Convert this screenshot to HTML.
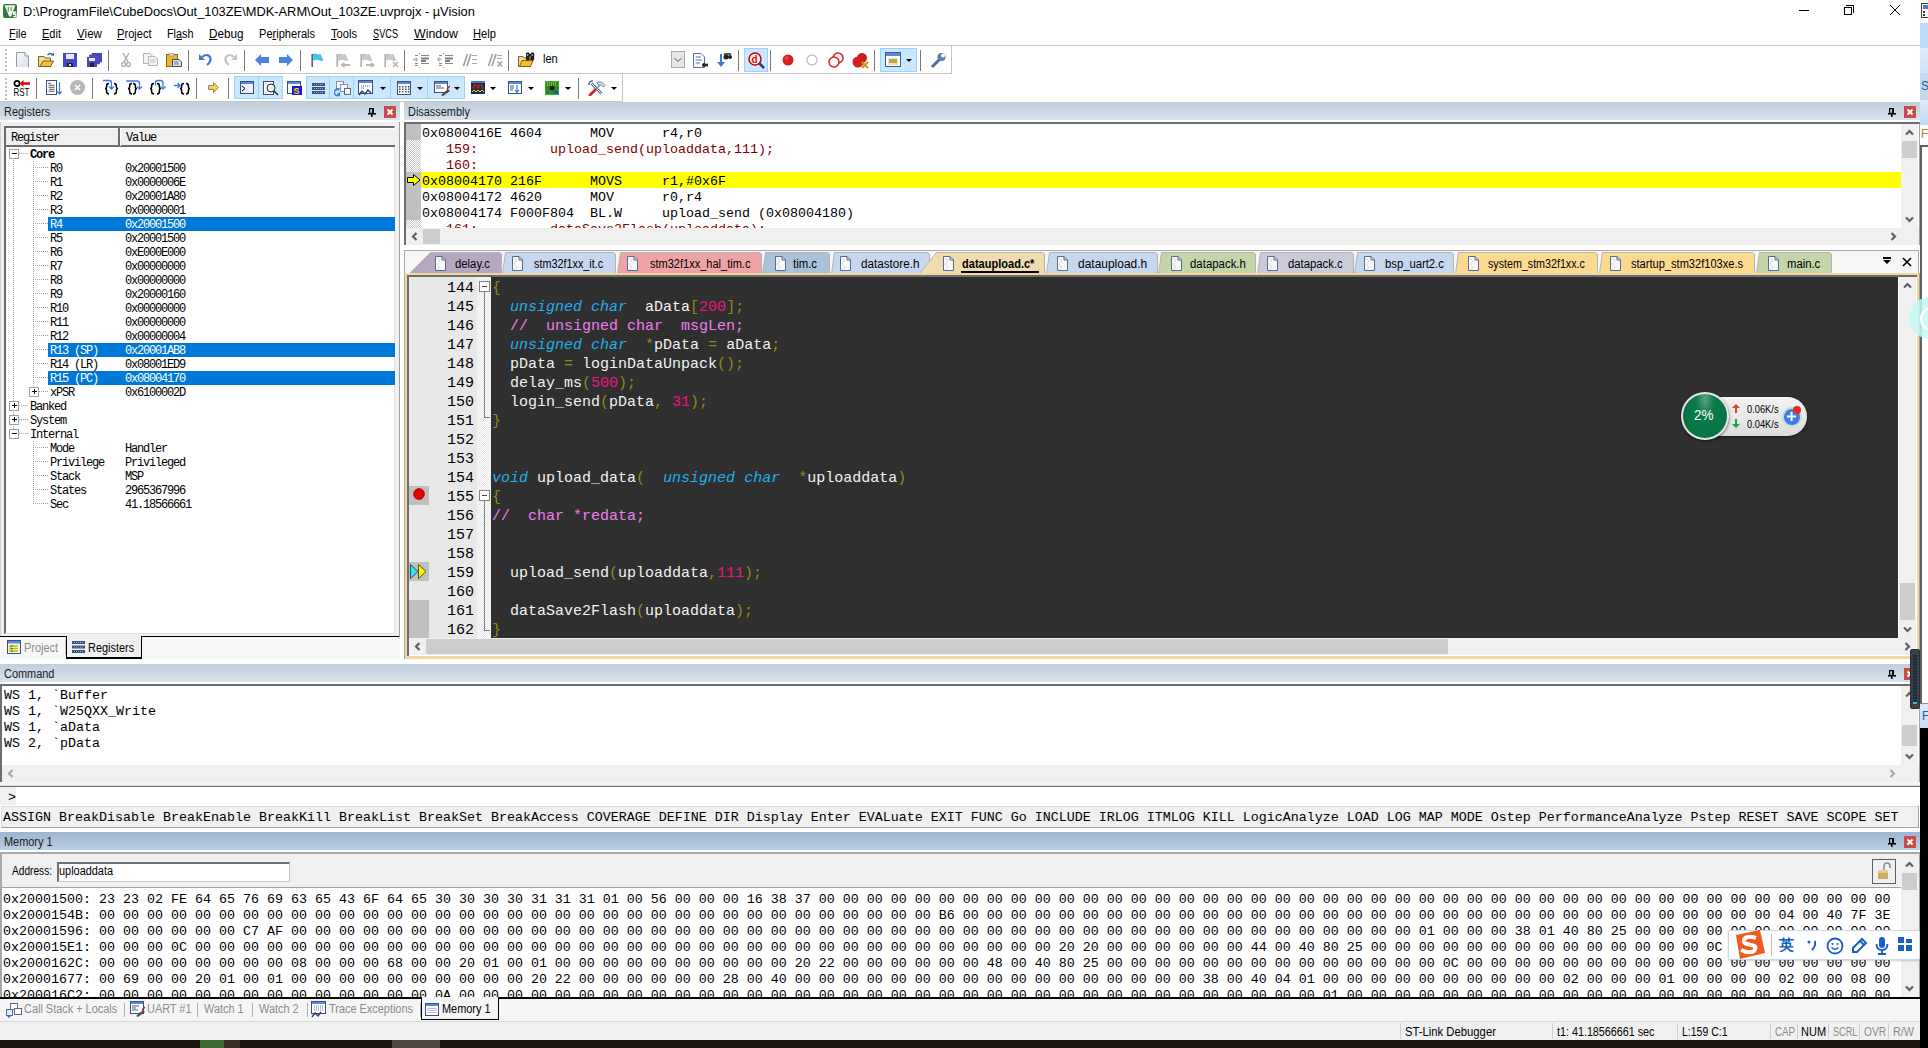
<!DOCTYPE html>
<html><head><meta charset="utf-8"><title>uVision</title>
<style>
*{box-sizing:border-box;margin:0;padding:0}
html,body{width:1928px;height:1048px;overflow:hidden;background:#fff}
body{position:relative;font-family:"Liberation Sans",sans-serif;font-size:12px;color:#000}
.a{position:absolute}
.ui{font-family:"Liberation Sans",sans-serif;font-size:12px;white-space:nowrap;transform:scaleX(.91);transform-origin:0 0}
.mono{font-family:"Liberation Mono",monospace;white-space:pre}
.hdr{position:absolute;height:18px;background:linear-gradient(#c1cedb,#d6e2ee);}
.hdr.act{background:linear-gradient(#9db4cf,#bcd0e6);}
.hdr span{position:absolute;left:4px;top:3px;font-size:12px;color:#1b1b1b;transform:scaleX(.91);transform-origin:0 0;white-space:nowrap}
.pin{position:absolute;width:8px;height:9px;top:6px}
svg{display:block}
.xbtn{position:absolute;width:12px;height:12px;top:4px;background:#c84c4c}
.sep{position:absolute;width:1px;background:#6e6e6e}
.dd{position:absolute;width:0;height:0;border-left:3px solid transparent;border-right:3px solid transparent;border-top:3px solid #000}
.selb{position:absolute;background:#cce8ff;border:1px solid #99d1ff}
</style><style>
.reg{font-family:"Liberation Mono",monospace;font-size:12px;letter-spacing:-1.2px;white-space:pre;line-height:13px;color:#000}
.cour{font-size:13.333px;line-height:16px;color:#000;margin-top:2px}
.ednum{font-size:15px;line-height:19px;color:#000}
.edcode{font-size:15px;line-height:19px;color:#f2f2f2}
.edcode i{font-style:italic}
</style>
</head><body>
<div class="a" style="left:0px;top:0px;width:1920px;height:22px;background:#fff"></div>
<svg class="a" style="left:3px;top:4px" width="14" height="14" viewBox="0 0 14 14"><rect x="0" y="0" width="14" height="14" rx="2" fill="#2f7a3c"/><path d="M1.5 1.3H12.3L8.2 12.5H6.2Z" fill="#f6faf6"/><path d="M5.3 2.8V7.5M8.2 2.8V7" stroke="#6aa872" stroke-width="1.3"/><path d="M13.2 8.3H10.6V10.3H12.8V12.6H10.2" fill="none" stroke="#fff" stroke-width="1.4"/></svg>
<div class="a ui" style="left:23px;top:4px;font-size:13px;color:#000;transform:scaleX(.988)">D:\ProgramFile\CubeDocs\Out_103ZE\MDK-ARM\Out_103ZE.uvprojx - µVision</div>
<div class="a" style="left:1799px;top:10px;width:10px;height:1px;background:#000"></div>
<div class="a" style="left:1846px;top:5px;width:8px;height:8px;border:1px solid #000;border-left:none;border-bottom:none"></div>
<div class="a" style="left:1844px;top:7px;width:8px;height:8px;border:1px solid #000;background:#fff"></div>
<svg class="a" style="left:1889px;top:4px" width="12" height="12"><path d="M1 1L11 11M11 1L1 11" stroke="#000" stroke-width="1"/></svg>
<div class="a ui" style="left:9px;top:27px;font-size:12px;color:#000;transform:scaleX(0.907)"><u style="text-decoration-thickness:1px;text-underline-offset:1px">F</u>ile</div>
<div class="a ui" style="left:42px;top:27px;font-size:12px;color:#000;transform:scaleX(0.918)"><u style="text-decoration-thickness:1px;text-underline-offset:1px">E</u>dit</div>
<div class="a ui" style="left:77px;top:27px;font-size:12px;color:#000;transform:scaleX(0.969)"><u style="text-decoration-thickness:1px;text-underline-offset:1px">V</u>iew</div>
<div class="a ui" style="left:117px;top:27px;font-size:12px;color:#000;transform:scaleX(0.928)"><u style="text-decoration-thickness:1px;text-underline-offset:1px">P</u>roject</div>
<div class="a ui" style="left:167px;top:27px;font-size:12px;color:#000;transform:scaleX(0.9)">Fl<u style="text-decoration-thickness:1px;text-underline-offset:1px">a</u>sh</div>
<div class="a ui" style="left:209px;top:27px;font-size:12px;color:#000;transform:scaleX(0.977)"><u style="text-decoration-thickness:1px;text-underline-offset:1px">D</u>ebug</div>
<div class="a ui" style="left:259px;top:27px;font-size:12px;color:#000;transform:scaleX(0.923)">Pe<u style="text-decoration-thickness:1px;text-underline-offset:1px">r</u>ipherals</div>
<div class="a ui" style="left:331px;top:27px;font-size:12px;color:#000;transform:scaleX(0.93)"><u style="text-decoration-thickness:1px;text-underline-offset:1px">T</u>ools</div>
<div class="a ui" style="left:373px;top:27px;font-size:12px;color:#000;transform:scaleX(0.765)"><u style="text-decoration-thickness:1px;text-underline-offset:1px">S</u>VCS</div>
<div class="a ui" style="left:414px;top:27px;font-size:12px;color:#000;transform:scaleX(1.03)"><u style="text-decoration-thickness:1px;text-underline-offset:1px">W</u>indow</div>
<div class="a ui" style="left:473px;top:27px;font-size:12px;color:#000;transform:scaleX(0.93)"><u style="text-decoration-thickness:1px;text-underline-offset:1px">H</u>elp</div>
<div class="a" style="left:0px;top:45px;width:1920px;height:1px;background:#c6c6c6"></div>
<div class="a" style="left:951px;top:45px;width:1px;height:29px;background:#c6c6c6"></div>
<div class="a" style="left:0px;top:73px;width:951px;height:1px;background:#c6c6c6"></div>
<div class="a" style="left:622px;top:74px;width:1px;height:28px;background:#c6c6c6"></div>
<div class="a" style="left:0px;top:101px;width:623px;height:1px;background:#c6c6c6"></div>
<div class="a" style="left:5px;top:49px;width:2px;height:2px;background:#c0c0c0"></div><div class="a" style="left:5px;top:53px;width:2px;height:2px;background:#c0c0c0"></div><div class="a" style="left:5px;top:57px;width:2px;height:2px;background:#c0c0c0"></div><div class="a" style="left:5px;top:61px;width:2px;height:2px;background:#c0c0c0"></div><div class="a" style="left:5px;top:65px;width:2px;height:2px;background:#c0c0c0"></div><div class="a" style="left:5px;top:69px;width:2px;height:2px;background:#c0c0c0"></div>
<svg class="a" style="left:16px;top:52px" width="13" height="15" viewBox="0 0 13 15"><defs><linearGradient id="gd" x1="0" y1="0" x2="1" y2="1"><stop offset="0" stop-color="#fafbfe"/><stop offset="1" stop-color="#d8e0f2"/></linearGradient></defs><path d="M0.5 15V0.5H9L12.5 4V15" fill="url(#gd)" stroke="#9a9a9a"/><path d="M9 0.5V4H12.5" fill="#fff" stroke="#9a9a9a"/></svg>
<svg class="a" style="left:38px;top:52px" width="17" height="16" viewBox="0 0 17 16"><path d="M0.5 4.5H6L7 6H12.5V14.5H0.5Z" fill="#f5df8a" stroke="#7a6030"/><path d="M2 14.5L5 9H15.5L12.5 14.5Z" fill="#f5c040" stroke="#7a6030"/><path d="M9.5 3Q12 0 15 3" fill="none" stroke="#2a5a98" stroke-width="1.3"/><path d="M13 3.5H16V0.5Z" fill="#2a5a98"/></svg>
<svg class="a" style="left:63px;top:53px" width="14" height="14" viewBox="0 0 14 14"><rect x="0" y="0" width="14" height="14" fill="#4848c0"/><rect x="3" y="1" width="8" height="5" fill="#e8ecf8"/><rect x="4" y="10" width="6" height="4" fill="#202040"/><rect x="6" y="11" width="2" height="2" fill="#ddd"/></svg>
<svg class="a" style="left:87px;top:53px" width="15" height="14" viewBox="0 0 15 14"><rect x="5" y="0" width="10" height="9" fill="#5050c8" stroke="#3030a0" stroke-width="0.5"/><rect x="2.5" y="2" width="10" height="9" fill="#5050c8" stroke="#3030a0" stroke-width="0.5"/><rect x="0" y="4" width="10" height="10" fill="#4848c0"/><rect x="2" y="5" width="6" height="3" fill="#e8ecf8"/><rect x="3" y="10" width="4" height="4" fill="#202040"/></svg>
<div class="a" style="left:108px;top:50px;width:1px;height:21px;background:#787878"></div>
<svg class="a" style="left:121px;top:53px" width="10" height="14" viewBox="0 0 10 14"><path d="M2 0L7 9M8 0L3 9" stroke="#b0b0b0" stroke-width="1.5"/><circle cx="2.5" cy="11.5" r="2" fill="none" stroke="#b0b0b0" stroke-width="1.3"/><circle cx="7.5" cy="11.5" r="2" fill="none" stroke="#b0b0b0" stroke-width="1.3"/></svg>
<svg class="a" style="left:143px;top:53px" width="16" height="13" viewBox="0 0 16 13"><path d="M0.5 0.5H7L9.5 3V10.5H0.5Z" fill="#f4f4f4" stroke="#b4b4b4"/><path d="M5.5 3.5H12L14.5 6V12.5H5.5Z" fill="#f4f4f4" stroke="#b4b4b4"/><path d="M7 7H12M7 9H12" stroke="#c0c0c0"/></svg>
<svg class="a" style="left:166px;top:53px" width="16" height="14" viewBox="0 0 16 14"><rect x="0.5" y="1.5" width="11" height="12" fill="#e8b830" stroke="#8a6a10"/><rect x="3" y="0" width="5" height="3" fill="#d4d4d4" stroke="#888" stroke-width="0.5"/><path d="M6.5 6.5H13L15.5 9V13.5H6.5Z" fill="#dde4f0" stroke="#404860"/><path d="M8 9H12M8 11H13" stroke="#6a7088"/></svg>
<div class="a" style="left:188px;top:50px;width:1px;height:21px;background:#787878"></div>
<svg class="a" style="left:199px;top:53px" width="13" height="13" viewBox="0 0 13 13"><path d="M3 4Q8 0 11 4Q13 8 8 12" fill="none" stroke="#3d78d8" stroke-width="2.2"/><path d="M0 1V7H6Z" fill="#3d78d8"/></svg>
<svg class="a" style="left:224px;top:53px" width="13" height="13" viewBox="0 0 13 13"><path d="M10 4Q5 0 2 4Q0 8 5 12" fill="none" stroke="#c4c4c4" stroke-width="2.2"/><path d="M13 1V7H7Z" fill="#c4c4c4"/></svg>
<div class="a" style="left:244px;top:50px;width:1px;height:21px;background:#787878"></div>
<svg class="a" style="left:255px;top:54px" width="14" height="12" viewBox="0 0 14 12"><path d="M0 6L6 0V3H14V9H6V12Z" fill="#4a84e0"/></svg>
<svg class="a" style="left:279px;top:54px" width="14" height="12" viewBox="0 0 14 12"><path d="M14 6L8 0V3H0V9H8V12Z" fill="#4a84e0"/></svg>
<div class="a" style="left:300px;top:50px;width:1px;height:21px;background:#787878"></div>
<svg class="a" style="left:310px;top:53px" width="15" height="15" viewBox="0 0 15 15"><path d="M2.5 1.5Q5 -0.5 8 1.5L10.5 1L13.5 7.5Q11 8.5 8.5 7Q6 6 3.5 8Z" fill="#3cc8e8"/><path d="M2.2 1V14" stroke="#606060" stroke-width="1.6"/></svg>
<svg class="a" style="left:335px;top:53px" width="17" height="15" viewBox="0 0 17 15"><path d="M2.5 1.5Q5 -0.5 8 1.5L10.5 1L13.5 7.5Q11 8.5 8.5 7Q6 6 3.5 8Z" fill="#c8c8c8"/><path d="M2.2 1V14" stroke="#b0b0b0" stroke-width="1.6"/><path d="M7.5 12H15M9.5 10L7 12L9.5 14" stroke="#b8b8b8" stroke-width="1.8" fill="none"/></svg>
<svg class="a" style="left:359px;top:53px" width="17" height="15" viewBox="0 0 17 15"><path d="M2.5 1.5Q5 -0.5 8 1.5L10.5 1L13.5 7.5Q11 8.5 8.5 7Q6 6 3.5 8Z" fill="#c8c8c8"/><path d="M2.2 1V14" stroke="#b0b0b0" stroke-width="1.6"/><path d="M7 12H14.5M12 10L14.5 12L12 14" stroke="#b8b8b8" stroke-width="1.8" fill="none"/></svg>
<svg class="a" style="left:383px;top:53px" width="17" height="15" viewBox="0 0 17 15"><path d="M2.5 1.5Q5 -0.5 8 1.5L10.5 1L13.5 7.5Q11 8.5 8.5 7Q6 6 3.5 8Z" fill="#c8c8c8"/><path d="M2.2 1V14" stroke="#b0b0b0" stroke-width="1.6"/><path d="M10 9L15 14M15 9L10 14" stroke="#b8b8b8" stroke-width="1.6"/></svg>
<div class="a" style="left:404px;top:50px;width:1px;height:21px;background:#787878"></div>
<svg class="a" style="left:413px;top:52px" width="17" height="17" viewBox="0 0 17 17"><path d="M2 3.5H5M2 11.5H5M2 13.5H5M8 3.5H16M8 11.5H16" stroke="#8a8a8a" stroke-width="1"/><path d="M8 6.5H16M8 9H13" stroke="#808080" stroke-width="1.8"/><rect x="6" y="1" width="1" height="1" fill="#808080"/><rect x="6" y="15" width="1" height="1" fill="#808080"/><path d="M0 7.5H4M2.5 5.5L4.5 7.5L2.5 9.5" stroke="#b8b8b8" stroke-width="1.3" fill="none"/></svg>
<svg class="a" style="left:437px;top:52px" width="17" height="17" viewBox="0 0 17 17"><path d="M2 3.5H5M2 11.5H5M2 13.5H5M8 3.5H16M8 11.5H16" stroke="#8a8a8a" stroke-width="1"/><path d="M8 6.5H16M8 9H13" stroke="#808080" stroke-width="1.8"/><rect x="6" y="1" width="1" height="1" fill="#808080"/><rect x="6" y="15" width="1" height="1" fill="#808080"/><path d="M0.5 7.5H4.5M2.5 5.5L0.5 7.5L2.5 9.5" stroke="#b8b8b8" stroke-width="1.3" fill="none"/></svg>
<svg class="a" style="left:462px;top:53px" width="16" height="14" viewBox="0 0 16 14"><path d="M1.5 13L5.5 1M5 13L9 1" stroke="#a0a0a0" stroke-width="1.6"/><path d="M10 2.5H15M10 6.5H15M10 10.5H15" stroke="#a8a8a8"/></svg>
<svg class="a" style="left:487px;top:53px" width="16" height="15" viewBox="0 0 16 15"><path d="M1.5 13L5.5 1M5 13L9 1" stroke="#a0a0a0" stroke-width="1.6"/><path d="M10 2.5H15M10 5.5H15" stroke="#a8a8a8"/><path d="M10.5 8.5L15 13.5M15 8.5L10.5 13.5" stroke="#a8a8a8" stroke-width="1.8"/></svg>
<div class="a" style="left:508px;top:50px;width:1px;height:21px;background:#787878"></div>
<svg class="a" style="left:518px;top:52px" width="17" height="16" viewBox="0 0 17 16"><path d="M0.5 4.5H5L6 6H12.5V14.5H0.5Z" fill="#f5e090" stroke="#806020"/><path d="M1.5 14.5L4 8.5H15L12.5 14.5Z" fill="#f5bf30" stroke="#806020"/><rect x="8" y="0.5" width="3.6" height="8" rx="1.4" fill="#1e1e1e"/><rect x="12.6" y="0.5" width="3.6" height="8" rx="1.4" fill="#1e1e1e"/><rect x="10.5" y="2" width="3" height="2.5" fill="#1e1e1e"/><rect x="9" y="2" width="1.2" height="2" fill="#aaa"/><rect x="13.6" y="2" width="1.2" height="2" fill="#aaa"/></svg>
<div class="a ui" style="left:543px;top:52px;font-size:12px;color:#000">len</div>
<svg class="a" style="left:671px;top:51px" width="14" height="17" viewBox="0 0 14 17"><rect x="0.5" y="0.5" width="13" height="16" fill="#e6e6e6" stroke="#a8a8a8"/><path d="M3.5 7L7 10.5L10.5 7" fill="none" stroke="#555"/></svg>
<svg class="a" style="left:693px;top:53px" width="15" height="15" viewBox="0 0 15 15"><path d="M0.5 0.5H8L11.5 4V14.5H0.5Z" fill="#fff" stroke="#6070a0"/><path d="M2.5 4H8M2.5 7H9M2.5 10H7" stroke="#4060c0" stroke-width="0.9"/><circle cx="11" cy="12" r="2" fill="#222"/><circle cx="14" cy="12" r="1.5" fill="#222"/></svg>
<svg class="a" style="left:715px;top:52px" width="17" height="16" viewBox="0 0 17 16"><path d="M5 2V10H2L6 15L10 10H7V2Z" fill="#3a7ad8"/><circle cx="11" cy="5" r="2.5" fill="#222"/><circle cx="15" cy="5" r="2" fill="#222"/><path d="M9 2H16" stroke="#222" stroke-width="1.5"/></svg>
<div class="a" style="left:738px;top:50px;width:1px;height:21px;background:#787878"></div>
<div class="selb" style="left:744px;top:48px;width:24px;height:24px"></div>
<svg class="a" style="left:748px;top:52px" width="17" height="17" viewBox="0 0 17 17"><circle cx="7" cy="7" r="6" fill="#fff" stroke="#c00" stroke-width="1.5"/><text x="3.5" y="11" font-family="Liberation Sans" font-weight="bold" font-size="10" fill="#e00">d</text><path d="M11 11L16 16" stroke="#2a3a8a" stroke-width="2.5"/></svg>
<div class="a" style="left:770px;top:50px;width:1px;height:21px;background:#787878"></div>
<svg class="a" style="left:782px;top:54px" width="12" height="12" viewBox="0 0 12 12"><circle cx="6" cy="6" r="5.5" fill="#d42020"/><circle cx="4.5" cy="4" r="2" fill="#f06060" opacity=".6"/></svg>
<svg class="a" style="left:806px;top:54px" width="12" height="12" viewBox="0 0 12 12"><circle cx="6" cy="6" r="5" fill="#fff" stroke="#c0c0c0" stroke-width="1.3"/></svg>
<svg class="a" style="left:828px;top:52px" width="16" height="16" viewBox="0 0 16 16"><circle cx="10" cy="6" r="5" fill="#fff" stroke="#d42020" stroke-width="1.5"/><circle cx="6" cy="10" r="5" fill="#fff" stroke="#d42020" stroke-width="1.5"/></svg>
<svg class="a" style="left:852px;top:52px" width="18" height="17" viewBox="0 0 18 17"><circle cx="10" cy="6" r="5" fill="#c82020"/><circle cx="6" cy="10" r="5.5" fill="#d42020"/><path d="M10 10L16 16M16 10L10 16" stroke="#c0a000" stroke-width="2"/></svg>
<div class="a" style="left:874px;top:50px;width:1px;height:21px;background:#787878"></div>
<div class="selb" style="left:880px;top:48px;width:37px;height:24px"></div>
<svg class="a" style="left:885px;top:52px" width="16" height="15" viewBox="0 0 16 15"><rect x="0.5" y="0.5" width="15" height="14" fill="#fff" stroke="#3a5a9a"/><rect x="1" y="1" width="14" height="3" fill="#5a8ad8"/><rect x="3" y="6" width="10" height="7" fill="#f0e8a0"/><path d="M4 8H12M4 10H12" stroke="#806020"/></svg>
<div class="dd" style="left:906px;top:59px"></div>
<div class="a" style="left:920px;top:50px;width:1px;height:21px;background:#787878"></div>
<svg class="a" style="left:929px;top:52px" width="18" height="17" viewBox="0 0 18 17"><path d="M3 15L11 7" stroke="#4a6aa0" stroke-width="3"/><circle cx="12.5" cy="5" r="4" fill="#5a7ab8"/><circle cx="14" cy="3.5" r="2" fill="#fff"/></svg>
<div class="a" style="left:5px;top:78px;width:2px;height:2px;background:#c0c0c0"></div><div class="a" style="left:5px;top:82px;width:2px;height:2px;background:#c0c0c0"></div><div class="a" style="left:5px;top:86px;width:2px;height:2px;background:#c0c0c0"></div><div class="a" style="left:5px;top:90px;width:2px;height:2px;background:#c0c0c0"></div><div class="a" style="left:5px;top:94px;width:2px;height:2px;background:#c0c0c0"></div><div class="a" style="left:5px;top:98px;width:2px;height:2px;background:#c0c0c0"></div>
<svg class="a" style="left:13px;top:79px" width="18" height="18" viewBox="0 0 18 18"><circle cx="4" cy="4.5" r="2.6" fill="#fff" stroke="#000" stroke-width="1.8"/><path d="M9 4.5H17" stroke="#e00" stroke-width="2.6"/><path d="M6.5 4.5L10.5 1V8Z" fill="#e00"/><text x="0.5" y="17" font-family="Liberation Sans" font-size="10.5" fill="#000" textLength="16" lengthAdjust="spacingAndGlyphs">RST</text></svg>
<div class="a" style="left:36px;top:78px;width:1px;height:21px;background:#787878"></div>
<svg class="a" style="left:46px;top:80px" width="16" height="15" viewBox="0 0 16 15"><rect x="0.5" y="0.5" width="10" height="14" fill="#fff" stroke="#3a5080"/><path d="M2 3.3H5M2.5 5.3H8.5M2.5 7.3H8.5M3 9.3H8.5M2.5 11.3H8.5" stroke="#1a2030" stroke-width="0.75"/><path d="M13.5 2V14M11 11.5L13.5 14L16 11.5" fill="none" stroke="#3a7ad8" stroke-width="1.2"/></svg>
<svg class="a" style="left:70px;top:80px" width="15" height="15" viewBox="0 0 15 15"><circle cx="7.5" cy="7.5" r="7.5" fill="#b8b8b8"/><path d="M5 5L10 10M10 5L5 10" stroke="#fff" stroke-width="1.6"/></svg>
<div class="a" style="left:92px;top:78px;width:1px;height:21px;background:#787878"></div>
<svg class="a" style="left:0;top:0" width="200" height="100" viewBox="0 0 200 100"><path d="M109 83.5Q106.6 83.5 106.6 86V87.3Q106.6 88.6 105 88.6Q106.6 88.6 106.6 90V91.5Q106.6 94 109 94" fill="none" stroke="#000" stroke-width="1.5"/><path d="M114 83.5Q116.4 83.5 116.4 86V87.3Q116.4 88.6 118 88.6Q116.4 88.6 116.4 90V91.5Q116.4 94 114 94" fill="none" stroke="#000" stroke-width="1.5"/><path d="M103 80.5H109Q111.5 80.5 111.5 83V88.5" fill="none" stroke="#3d7ae8" stroke-width="1.3"/><path d="M109 86.5L111.5 89L114 86.5" fill="none" stroke="#3d7ae8" stroke-width="1.3"/><path d="M132 83.5Q129.6 83.5 129.6 86V87.3Q129.6 88.6 128 88.6Q129.6 88.6 129.6 90V91.5Q129.6 94 132 94" fill="none" stroke="#000" stroke-width="1.5"/><path d="M133 83.5Q135.4 83.5 135.4 86V87.3Q135.4 88.6 137 88.6Q135.4 88.6 135.4 90V91.5Q135.4 94 133 94" fill="none" stroke="#000" stroke-width="1.5"/><path d="M127 82V81H137Q139.5 81 139.5 83.5V88" fill="none" stroke="#3d7ae8" stroke-width="1.3"/><path d="M137 86.5L139.5 89L142 86.5" fill="none" stroke="#3d7ae8" stroke-width="1.3"/><path d="M154 83.5Q151.6 83.5 151.6 86V87.3Q151.6 88.6 150 88.6Q151.6 88.6 151.6 90V91.5Q151.6 94 154 94" fill="none" stroke="#000" stroke-width="1.5"/><path d="M157 83.5Q159.4 83.5 159.4 86V87.3Q159.4 88.6 161 88.6Q159.4 88.6 159.4 90V91.5Q159.4 94 157 94" fill="none" stroke="#000" stroke-width="1.5"/><path d="M155.5 85.5V83Q155.5 80.5 158 80.5H160.5Q163 80.5 163 83V88" fill="none" stroke="#3d7ae8" stroke-width="1.3"/><path d="M160.5 86.5L163 89L165.5 86.5" fill="none" stroke="#3d7ae8" stroke-width="1.3"/><path d="M184 83.5Q181.6 83.5 181.6 86V87.3Q181.6 88.6 180 88.6Q181.6 88.6 181.6 90V91.5Q181.6 94 184 94" fill="none" stroke="#000" stroke-width="1.5"/><path d="M186 83.5Q188.4 83.5 188.4 86V87.3Q188.4 88.6 190 88.6Q188.4 88.6 188.4 90V91.5Q188.4 94 186 94" fill="none" stroke="#000" stroke-width="1.5"/><path d="M174 85.5H180M177.5 83L180 85.5L177.5 88" fill="none" stroke="#3d7ae8" stroke-width="1.3"/></svg>
<div class="a" style="left:196px;top:78px;width:1px;height:21px;background:#787878"></div>
<svg class="a" style="left:208px;top:82px" width="11" height="11" viewBox="0 0 11 11"><path d="M0.5 3.5H5.5V0.5L10.5 5.5L5.5 10.5V7.5H0.5Z" fill="#f0d060" stroke="#907020" stroke-width="0.8"/></svg>
<div class="a" style="left:228px;top:78px;width:1px;height:21px;background:#787878"></div>
<div class="selb" style="left:234px;top:76px;width:49px;height:23px"></div>
<div class="a" style="left:258px;top:77px;width:1px;height:21px;background:#99d1ff"></div>
<svg class="a" style="left:240px;top:81px" width="14" height="13" viewBox="0 0 14 13"><rect x="0.5" y="0.5" width="13" height="12" fill="#eef2f8" stroke="#3a5080"/><rect x="1" y="1" width="12" height="2" fill="#5a8ad8"/><path d="M2 5L5 7.5L2 10" fill="none" stroke="#000"/></svg>
<svg class="a" style="left:263px;top:81px" width="16" height="16" viewBox="0 0 16 16"><rect x="0.5" y="0.5" width="10" height="13" fill="#fff" stroke="#3a5080"/><circle cx="8" cy="7" r="4" fill="#e8f0ff" stroke="#202020"/><path d="M11 10L15 14" stroke="#202020" stroke-width="1.5"/></svg>
<svg class="a" style="left:287px;top:81px" width="16" height="14" viewBox="0 0 16 14"><rect x="0.5" y="0.5" width="13" height="12" fill="#fff" stroke="#3a5080"/><rect x="1" y="1" width="12" height="2" fill="#5a8ad8"/><rect x="5" y="5" width="10" height="9" fill="#1a1ad0"/><text x="6.5" y="13" font-family="Liberation Sans" font-weight="bold" font-size="9" fill="#ffe000">S</text></svg>
<div class="selb" style="left:306px;top:76px;width:159px;height:23px"></div>
<div class="a" style="left:329px;top:77px;width:1px;height:21px;background:#99d1ff"></div>
<div class="a" style="left:353px;top:77px;width:1px;height:21px;background:#99d1ff"></div>
<div class="a" style="left:390px;top:77px;width:1px;height:21px;background:#99d1ff"></div>
<div class="a" style="left:427px;top:77px;width:1px;height:21px;background:#99d1ff"></div>
<svg class="a" style="left:312px;top:83px" width="13" height="11" viewBox="0 0 13 11"><rect x="0" y="0" width="13" height="3" fill="#3a5080"/><rect x="0" y="4" width="13" height="3" fill="#3a5080"/><rect x="0" y="8" width="13" height="3" fill="#3a5080"/><path d="M2 1.5H11M2 5.5H11M2 9.5H11" stroke="#8ab0e0" stroke-dasharray="1,1"/></svg>
<svg class="a" style="left:334px;top:81px" width="17" height="16" viewBox="0 0 17 16"><rect x="2.5" y="0.5" width="7" height="7" fill="#f4f6fa" stroke="#8090b0"/><rect x="6.5" y="3.5" width="7" height="7" fill="#f4f6fa" stroke="#8090b0"/><rect x="10.5" y="7.5" width="6" height="6" fill="#f4f6fa" stroke="#606a80"/><path d="M5 9A3 3 0 1 0 5 14" fill="none" stroke="#3a7ad8" stroke-width="1.6"/><path d="M3 13L6 15.5L6 11Z" fill="#3a7ad8"/></svg>
<svg class="a" style="left:358px;top:80px" width="17" height="16" viewBox="0 0 17 16"><rect x="0.5" y="0.5" width="14" height="13" fill="#fff" stroke="#3a5080"/><rect x="1" y="1" width="13" height="2" fill="#5a8ad8"/><path d="M3 6H8M9 6H12M3 8H6" stroke="#506080" stroke-dasharray="1,1"/><path d="M1 15L4 11L7 14L10 10L13 13" fill="none" stroke="#2a3a6a" stroke-width="1.3"/></svg>
<div class="dd" style="left:380px;top:87px"></div>
<svg class="a" style="left:397px;top:81px" width="15" height="14" viewBox="0 0 15 14"><rect x="0.5" y="0.5" width="13" height="13" fill="#fff" stroke="#3a5080"/><rect x="1" y="1" width="12" height="2" fill="#5a8ad8"/><rect x="2" y="5.0" width="1.5" height="1.5" fill="#404860"/><rect x="2" y="7.5" width="1.5" height="1.5" fill="#404860"/><rect x="2" y="10.0" width="1.5" height="1.5" fill="#404860"/><rect x="5" y="5.0" width="1.5" height="1.5" fill="#404860"/><rect x="5" y="7.5" width="1.5" height="1.5" fill="#404860"/><rect x="5" y="10.0" width="1.5" height="1.5" fill="#404860"/><rect x="8" y="5.0" width="1.5" height="1.5" fill="#404860"/><rect x="8" y="7.5" width="1.5" height="1.5" fill="#404860"/><rect x="8" y="10.0" width="1.5" height="1.5" fill="#404860"/><rect x="11" y="5.0" width="1.5" height="1.5" fill="#404860"/><rect x="11" y="7.5" width="1.5" height="1.5" fill="#404860"/><rect x="11" y="10.0" width="1.5" height="1.5" fill="#404860"/></svg>
<div class="dd" style="left:417px;top:87px"></div>
<svg class="a" style="left:434px;top:81px" width="16" height="15" viewBox="0 0 16 15"><rect x="0.5" y="0.5" width="13" height="11" fill="#fff" stroke="#3a5080"/><rect x="1" y="1" width="12" height="2" fill="#5a8ad8"/><path d="M2 5H7M2 7H10" stroke="#506080"/><path d="M7 14L14 8L16 10L9 15Z" fill="#505050"/><path d="M13 8L16 5" stroke="#c02020" stroke-width="1.5"/></svg>
<div class="dd" style="left:454px;top:87px"></div>
<svg class="a" style="left:471px;top:81px" width="14" height="13" viewBox="0 0 14 13"><rect x="0" y="0" width="14" height="13" fill="#1a2a4a"/><rect x="0" y="0" width="14" height="2" fill="#4a7ac0"/><path d="M1 7H3V4H6V7H8V4H11V7H13" fill="none" stroke="#e02020" stroke-width="1.2"/><path d="M1 11L3 9L5 11L7 9L9 11L11 9L13 11" fill="none" stroke="#e0e020" stroke-width="1"/></svg>
<div class="dd" style="left:490px;top:87px"></div>
<svg class="a" style="left:508px;top:81px" width="14" height="13" viewBox="0 0 14 13"><rect x="0.5" y="0.5" width="13" height="12" fill="#fff" stroke="#3a5080"/><rect x="1" y="1" width="12" height="2" fill="#5a8ad8"/><path d="M2 5H6M2 7H6M2 9H5" stroke="#506080"/><path d="M9 4V11M7 9L9 11.5L11 9" fill="none" stroke="#3a7ad8" stroke-width="1.2"/></svg>
<div class="dd" style="left:528px;top:87px"></div>
<svg class="a" style="left:545px;top:81px" width="14" height="14" viewBox="0 0 14 14"><rect x="0" y="0" width="14" height="14" fill="#3aa830"/><rect x="1" y="1" width="12" height="12" fill="#2a8a20"/><circle cx="7" cy="7" r="2.5" fill="#222"/><circle cx="11.5" cy="11.5" r="2" fill="#2050d0"/><path d="M2 2H12M2 4H12" stroke="#d0e060" stroke-dasharray="1,1"/></svg>
<div class="dd" style="left:565px;top:87px"></div>
<div class="a" style="left:578px;top:78px;width:1px;height:21px;background:#787878"></div>
<svg class="a" style="left:588px;top:80px" width="18" height="16" viewBox="0 0 18 16"><path d="M3.5 3.5L13.5 13.5" stroke="#5a6a8a" stroke-width="2.6"/><path d="M3.5 3.5L13.5 13.5" stroke="#f4f6fa" stroke-width="1"/><path d="M1 5A3.5 3.5 0 0 1 5 1" stroke="#5a6a8a" stroke-width="1.6" fill="none"/><path d="M7 10L12 5" stroke="#8090a8" stroke-width="1.6"/><path d="M2 15L7 10" stroke="#d02828" stroke-width="2.8" stroke-linecap="round"/><path d="M9 2.5Q13 0 17 5.5L15.5 7Q12.5 4 10.5 5Z" fill="#d8deea" stroke="#6a7a9a" stroke-width="0.9"/></svg>
<div class="dd" style="left:611px;top:87px"></div>
<div class="hdr" style="left:0;top:102px;width:400px"><span>Registers</span><div class="pin" style="left:368px"><svg width="8" height="9" viewBox="0 0 8 9"><rect x="1" y="0" width="5" height="6" fill="#000"/><rect x="2.3" y="1.2" width="1.6" height="3.6" fill="#dfe8f2"/><rect x="0" y="5" width="8" height="1.6" fill="#000"/><rect x="3" y="6" width="1.6" height="3" fill="#000"/></svg></div><div class="xbtn" style="left:384px"><svg width="12" height="12" viewBox="0 0 12 12"><path d="M3.5 3.5L8.5 8.5M8.5 3.5L3.5 8.5" stroke="#fff" stroke-width="1.9"/></svg></div></div>
<div class="a" style="left:0px;top:122px;width:400px;height:515px;background:#f0f0f0;border-left:1px solid #d0d0d0;border-right:1px solid #a0a0a0"></div>
<div class="a" style="left:4px;top:126px;width:391px;height:508px;background:#fff;border-left:2px solid #6d6d6d;border-top:2px solid #6d6d6d;border-right:1px solid #e0e0e0;border-bottom:1px solid #e0e0e0"></div>
<div class="a" style="left:6px;top:128px;width:389px;height:19px;background:#f0f0f0;border-top:1px solid #fff;border-bottom:2px solid #6d6d6d"></div>
<div class="a" style="left:118px;top:128px;width:2px;height:19px;background:#6d6d6d"></div>
<div class="a" style="left:120px;top:129px;width:1px;height:17px;background:#fff"></div>
<div class="a reg" style="left:11px;top:132px">Register</div>
<div class="a reg" style="left:126px;top:132px">Value</div>
<div class="a" style="left:13px;top:158px;width:1px;height:275px;background-image:repeating-linear-gradient(180deg,#a0a0a0 0 1px,transparent 1px 2px)"></div>
<div class="a" style="left:33px;top:161px;width:1px;height:231px;background-image:repeating-linear-gradient(180deg,#a0a0a0 0 1px,transparent 1px 2px)"></div>
<div class="a" style="left:33px;top:441px;width:1px;height:63px;background-image:repeating-linear-gradient(180deg,#a0a0a0 0 1px,transparent 1px 2px)"></div>
<div class="a" style="left:19px;top:153px;width:10px;height:1px;background-image:repeating-linear-gradient(90deg,#a0a0a0 0 1px,transparent 1px 2px)"></div>
<div class="a" style="left:9px;top:149px;width:10px;height:10px;background:#fff;border:1px solid #a0a0a0"><div class="a" style="left:2px;top:3px;width:5px;height:1px;background:#000"></div></div>
<div class="a reg" style="left:30px;top:149px;font-weight:bold">Core</div>
<div class="a" style="left:35px;top:167px;width:13px;height:1px;background-image:repeating-linear-gradient(90deg,#a0a0a0 0 1px,transparent 1px 2px)"></div>
<div class="a reg" style="left:50px;top:163px;color:#000">R0</div>
<div class="a reg" style="left:125px;top:163px;color:#000">0x20001500</div>
<div class="a" style="left:35px;top:181px;width:13px;height:1px;background-image:repeating-linear-gradient(90deg,#a0a0a0 0 1px,transparent 1px 2px)"></div>
<div class="a reg" style="left:50px;top:177px;color:#000">R1</div>
<div class="a reg" style="left:125px;top:177px;color:#000">0x0000006E</div>
<div class="a" style="left:35px;top:195px;width:13px;height:1px;background-image:repeating-linear-gradient(90deg,#a0a0a0 0 1px,transparent 1px 2px)"></div>
<div class="a reg" style="left:50px;top:191px;color:#000">R2</div>
<div class="a reg" style="left:125px;top:191px;color:#000">0x20001A80</div>
<div class="a" style="left:35px;top:209px;width:13px;height:1px;background-image:repeating-linear-gradient(90deg,#a0a0a0 0 1px,transparent 1px 2px)"></div>
<div class="a reg" style="left:50px;top:205px;color:#000">R3</div>
<div class="a reg" style="left:125px;top:205px;color:#000">0x00000001</div>
<div class="a" style="left:48px;top:217px;width:347px;height:14px;background:#0078d7"></div>
<div class="a" style="left:35px;top:223px;width:13px;height:1px;background-image:repeating-linear-gradient(90deg,#a0a0a0 0 1px,transparent 1px 2px)"></div>
<div class="a reg" style="left:50px;top:219px;color:#fff">R4</div>
<div class="a reg" style="left:125px;top:219px;color:#fff">0x20001500</div>
<div class="a" style="left:35px;top:237px;width:13px;height:1px;background-image:repeating-linear-gradient(90deg,#a0a0a0 0 1px,transparent 1px 2px)"></div>
<div class="a reg" style="left:50px;top:233px;color:#000">R5</div>
<div class="a reg" style="left:125px;top:233px;color:#000">0x20001500</div>
<div class="a" style="left:35px;top:251px;width:13px;height:1px;background-image:repeating-linear-gradient(90deg,#a0a0a0 0 1px,transparent 1px 2px)"></div>
<div class="a reg" style="left:50px;top:247px;color:#000">R6</div>
<div class="a reg" style="left:125px;top:247px;color:#000">0xE000E000</div>
<div class="a" style="left:35px;top:265px;width:13px;height:1px;background-image:repeating-linear-gradient(90deg,#a0a0a0 0 1px,transparent 1px 2px)"></div>
<div class="a reg" style="left:50px;top:261px;color:#000">R7</div>
<div class="a reg" style="left:125px;top:261px;color:#000">0x00000000</div>
<div class="a" style="left:35px;top:279px;width:13px;height:1px;background-image:repeating-linear-gradient(90deg,#a0a0a0 0 1px,transparent 1px 2px)"></div>
<div class="a reg" style="left:50px;top:275px;color:#000">R8</div>
<div class="a reg" style="left:125px;top:275px;color:#000">0x00000000</div>
<div class="a" style="left:35px;top:293px;width:13px;height:1px;background-image:repeating-linear-gradient(90deg,#a0a0a0 0 1px,transparent 1px 2px)"></div>
<div class="a reg" style="left:50px;top:289px;color:#000">R9</div>
<div class="a reg" style="left:125px;top:289px;color:#000">0x20000160</div>
<div class="a" style="left:35px;top:307px;width:13px;height:1px;background-image:repeating-linear-gradient(90deg,#a0a0a0 0 1px,transparent 1px 2px)"></div>
<div class="a reg" style="left:50px;top:303px;color:#000">R10</div>
<div class="a reg" style="left:125px;top:303px;color:#000">0x00000000</div>
<div class="a" style="left:35px;top:321px;width:13px;height:1px;background-image:repeating-linear-gradient(90deg,#a0a0a0 0 1px,transparent 1px 2px)"></div>
<div class="a reg" style="left:50px;top:317px;color:#000">R11</div>
<div class="a reg" style="left:125px;top:317px;color:#000">0x00000000</div>
<div class="a" style="left:35px;top:335px;width:13px;height:1px;background-image:repeating-linear-gradient(90deg,#a0a0a0 0 1px,transparent 1px 2px)"></div>
<div class="a reg" style="left:50px;top:331px;color:#000">R12</div>
<div class="a reg" style="left:125px;top:331px;color:#000">0x00000004</div>
<div class="a" style="left:48px;top:343px;width:347px;height:14px;background:#0078d7"></div>
<div class="a" style="left:35px;top:349px;width:13px;height:1px;background-image:repeating-linear-gradient(90deg,#a0a0a0 0 1px,transparent 1px 2px)"></div>
<div class="a reg" style="left:50px;top:345px;color:#fff">R13 (SP)</div>
<div class="a reg" style="left:125px;top:345px;color:#fff">0x20001AB8</div>
<div class="a" style="left:35px;top:363px;width:13px;height:1px;background-image:repeating-linear-gradient(90deg,#a0a0a0 0 1px,transparent 1px 2px)"></div>
<div class="a reg" style="left:50px;top:359px;color:#000">R14 (LR)</div>
<div class="a reg" style="left:125px;top:359px;color:#000">0x08001ED9</div>
<div class="a" style="left:48px;top:371px;width:347px;height:14px;background:#0078d7"></div>
<div class="a" style="left:35px;top:377px;width:13px;height:1px;background-image:repeating-linear-gradient(90deg,#a0a0a0 0 1px,transparent 1px 2px)"></div>
<div class="a reg" style="left:50px;top:373px;color:#fff">R15 (PC)</div>
<div class="a reg" style="left:125px;top:373px;color:#fff">0x08004170</div>
<div class="a" style="left:39px;top:391px;width:9px;height:1px;background-image:repeating-linear-gradient(90deg,#a0a0a0 0 1px,transparent 1px 2px)"></div>
<div class="a" style="left:29px;top:387px;width:10px;height:10px;background:#fff;border:1px solid #a0a0a0"><div class="a" style="left:2px;top:3px;width:5px;height:1px;background:#000"></div><div class="a" style="left:4px;top:1px;width:1px;height:5px;background:#000"></div></div>
<div class="a reg" style="left:50px;top:387px;color:#000">xPSR</div>
<div class="a reg" style="left:125px;top:387px;color:#000">0x6100002D</div>
<div class="a" style="left:19px;top:405px;width:10px;height:1px;background-image:repeating-linear-gradient(90deg,#a0a0a0 0 1px,transparent 1px 2px)"></div>
<div class="a" style="left:9px;top:401px;width:10px;height:10px;background:#fff;border:1px solid #a0a0a0"><div class="a" style="left:2px;top:3px;width:5px;height:1px;background:#000"></div><div class="a" style="left:4px;top:1px;width:1px;height:5px;background:#000"></div></div>
<div class="a reg" style="left:30px;top:401px;font-weight:normal">Banked</div>
<div class="a" style="left:19px;top:419px;width:10px;height:1px;background-image:repeating-linear-gradient(90deg,#a0a0a0 0 1px,transparent 1px 2px)"></div>
<div class="a" style="left:9px;top:415px;width:10px;height:10px;background:#fff;border:1px solid #a0a0a0"><div class="a" style="left:2px;top:3px;width:5px;height:1px;background:#000"></div><div class="a" style="left:4px;top:1px;width:1px;height:5px;background:#000"></div></div>
<div class="a reg" style="left:30px;top:415px;font-weight:normal">System</div>
<div class="a" style="left:19px;top:433px;width:10px;height:1px;background-image:repeating-linear-gradient(90deg,#a0a0a0 0 1px,transparent 1px 2px)"></div>
<div class="a" style="left:9px;top:429px;width:10px;height:10px;background:#fff;border:1px solid #a0a0a0"><div class="a" style="left:2px;top:3px;width:5px;height:1px;background:#000"></div></div>
<div class="a reg" style="left:30px;top:429px;font-weight:normal">Internal</div>
<div class="a" style="left:35px;top:447px;width:13px;height:1px;background-image:repeating-linear-gradient(90deg,#a0a0a0 0 1px,transparent 1px 2px)"></div>
<div class="a reg" style="left:50px;top:443px;color:#000">Mode</div>
<div class="a reg" style="left:125px;top:443px;color:#000">Handler</div>
<div class="a" style="left:35px;top:461px;width:13px;height:1px;background-image:repeating-linear-gradient(90deg,#a0a0a0 0 1px,transparent 1px 2px)"></div>
<div class="a reg" style="left:50px;top:457px;color:#000">Privilege</div>
<div class="a reg" style="left:125px;top:457px;color:#000">Privileged</div>
<div class="a" style="left:35px;top:475px;width:13px;height:1px;background-image:repeating-linear-gradient(90deg,#a0a0a0 0 1px,transparent 1px 2px)"></div>
<div class="a reg" style="left:50px;top:471px;color:#000">Stack</div>
<div class="a reg" style="left:125px;top:471px;color:#000">MSP</div>
<div class="a" style="left:35px;top:489px;width:13px;height:1px;background-image:repeating-linear-gradient(90deg,#a0a0a0 0 1px,transparent 1px 2px)"></div>
<div class="a reg" style="left:50px;top:485px;color:#000">States</div>
<div class="a reg" style="left:125px;top:485px;color:#000">2965367996</div>
<div class="a" style="left:35px;top:503px;width:13px;height:1px;background-image:repeating-linear-gradient(90deg,#a0a0a0 0 1px,transparent 1px 2px)"></div>
<div class="a reg" style="left:50px;top:499px;color:#000">Sec</div>
<div class="a reg" style="left:125px;top:499px;color:#000">41.18566661</div>
<div class="a" style="left:0px;top:637px;width:400px;height:23px;background:#f7f7f7"></div>
<div class="a" style="left:0px;top:636px;width:399px;height:1px;background:#000"></div>
<div class="a" style="left:66px;top:636px;width:76px;height:23px;background:#f0f0f0;border:1px solid #000;border-top:none;border-bottom-width:2px"></div>
<div class="a" style="left:67px;top:636px;width:74px;height:1px;background:#f0f0f0"></div>
<svg class="a" style="left:7px;top:640px" width="14" height="14" viewBox="0 0 14 14"><rect x="0.5" y="0.5" width="13" height="13" fill="#f4f6fa" stroke="#405070"/><rect x="1" y="1" width="12" height="2.5" fill="#5a8ad8"/><path d="M3 5V12M3 6H11M3 8.5H11M3 11H11" stroke="#b8c000" stroke-width="1.3"/><path d="M4 6H6M4 8.5H6M4 11H6" stroke="#404000" stroke-width="0.8"/></svg>
<div class="a ui" style="left:24px;top:641px;color:#8c8c8c">Project</div>
<div class="a" style="left:65px;top:640px;width:1px;height:15px;background:#c0c0c0"></div>
<svg class="a" style="left:72px;top:641px" width="13" height="12" viewBox="0 0 13 12"><rect x="0" y="0" width="13" height="3" fill="#3a5080"/><rect x="0" y="4.5" width="13" height="3" fill="#3a5080"/><rect x="0" y="9" width="13" height="3" fill="#3a5080"/><path d="M2 1.5H11M2 6H11M2 10.5H11" stroke="#9ab8e0" stroke-dasharray="1,1"/></svg>
<div class="a ui" style="left:88px;top:641px;color:#000">Registers</div>
<div class="hdr" style="left:404px;top:102px;width:1516px"><span>Disassembly</span><div class="pin" style="left:1484px"><svg width="8" height="9" viewBox="0 0 8 9"><rect x="1" y="0" width="5" height="6" fill="#000"/><rect x="2.3" y="1.2" width="1.6" height="3.6" fill="#dfe8f2"/><rect x="0" y="5" width="8" height="1.6" fill="#000"/><rect x="3" y="6" width="1.6" height="3" fill="#000"/></svg></div><div class="xbtn" style="left:1500px"><svg width="12" height="12" viewBox="0 0 12 12"><path d="M3.5 3.5L8.5 8.5M8.5 3.5L3.5 8.5" stroke="#fff" stroke-width="1.9"/></svg></div></div>
<div class="a" style="left:404px;top:122px;width:1516px;height:123px;background:#fff;border-left:2px solid #6d6d6d;border-top:2px solid #6d6d6d;border-right:1px solid #a0a0a0"></div>
<div class="a" style="left:406px;top:124px;width:15px;height:104px;background:#c0c0c0"></div>
<div class="a" style="left:406px;top:140px;width:15px;height:32px;background-color:#fff;background-image:linear-gradient(45deg,#c8c8c8 25%,transparent 25%,transparent 75%,#c8c8c8 75%),linear-gradient(45deg,#c8c8c8 25%,transparent 25%,transparent 75%,#c8c8c8 75%);background-size:2px 2px;background-position:0 0,1px 1px"></div>
<div class="a" style="left:406px;top:220px;width:15px;height:8px;background-color:#fff;background-image:linear-gradient(45deg,#c8c8c8 25%,transparent 25%,transparent 75%,#c8c8c8 75%),linear-gradient(45deg,#c8c8c8 25%,transparent 25%,transparent 75%,#c8c8c8 75%);background-size:2px 2px;background-position:0 0,1px 1px"></div>
<div class="a" style="left:421px;top:172px;width:1480px;height:16px;background:#ffff00"></div>
<svg class="a" style="left:407px;top:174px" width="14" height="12" viewBox="0 0 14 12"><path d="M0.5 3.5H6.5V0.5L13 6L6.5 11.5V8.5H0.5Z" fill="#ffff00" stroke="#000" stroke-width="1"/></svg>
<div class="a" style="left:421px;top:124px;width:1480px;height:104px;overflow:hidden"><div class="a mono cour" style="left:1px;top:0px;color:#000">0x0800416E 4604      MOV      r4,r0</div><div class="a mono cour" style="left:1px;top:16px;color:#800000">   159:         upload_send(uploaddata,111);</div><div class="a mono cour" style="left:1px;top:32px;color:#800000">   160: </div><div class="a mono cour" style="left:1px;top:48px;color:#000">0x08004170 216F      MOVS     r1,#0x6F</div><div class="a mono cour" style="left:1px;top:64px;color:#000">0x08004172 4620      MOV      r0,r4</div><div class="a mono cour" style="left:1px;top:80px;color:#000">0x08004174 F000F804  BL.W     upload_send (0x08004180)</div><div class="a mono cour" style="left:1px;top:96px;color:#800000">   161:         dataSave2Flash(uploaddata);</div></div>
<div class="a" style="left:1901px;top:124px;width:17px;height:104px;background:#f0f0f0"></div>
<svg class="a" style="left:1905px;top:129px" width="9" height="7" viewBox="0 0 9 7"><path d="M1 5.5L4.5 2L8 5.5" fill="none" stroke="#606060" stroke-width="2.2"/></svg>
<svg class="a" style="left:1905px;top:216px" width="9" height="7" viewBox="0 0 9 7"><path d="M1 1.5L4.5 5L8 1.5" fill="none" stroke="#606060" stroke-width="2.2"/></svg>
<div class="a" style="left:1902px;top:141px;width:15px;height:17px;background:#cdcdcd"></div>
<div class="a" style="left:406px;top:228px;width:1496px;height:17px;background:#f0f0f0"></div>
<svg class="a" style="left:411px;top:232px" width="7" height="9" viewBox="0 0 7 9"><path d="M5.5 1L2 4.5L5.5 8" fill="none" stroke="#606060" stroke-width="2.2"/></svg>
<svg class="a" style="left:1890px;top:232px" width="7" height="9" viewBox="0 0 7 9"><path d="M1.5 1L5 4.5L1.5 8" fill="none" stroke="#606060" stroke-width="2.2"/></svg>
<div class="a" style="left:423px;top:229px;width:17px;height:15px;background:#cdcdcd"></div>
<div class="a" style="left:1901px;top:228px;width:18px;height:17px;background:#f0f0f0"></div>
<div class="a" style="left:404px;top:250px;width:1515px;height:24px;background:#f7f7f7;border-top:1px solid #a8a8a8;border-left:1px solid #a8a8a8;border-right:1px solid #a8a8a8"></div>
<svg class="a" style="left:409px;top:252px" width="93" height="22" viewBox="0 0 93 22"><path d="M0.5 21.5L21.5 0.5H90.5L92.5 2V21.5" fill="#b6a8c0" stroke="#b4b4b4" stroke-width="1"/></svg>
<svg class="a" style="left:435px;top:256px" width="11" height="15" viewBox="0 0 11 15"><path d="M0.5 0.5H7L10.5 4V14.5H0.5Z" fill="#f8f8f8" stroke="#5a6a8a"/><path d="M7 0.5V4H10.5" fill="none" stroke="#5a6a8a"/><path d="M2 2L5 5L2 8L5 11L2 14" stroke="#d8d8d8" fill="none"/></svg>
<div class="a ui" style="left:455px;top:257px;color:#000;transform:scaleX(0.943)">delay.c</div>
<svg class="a" style="left:502px;top:252px" width="114" height="22" viewBox="0 0 114 22"><path d="M0.5 21.5L3.5 0.5H111.5L113.5 2V21.5" fill="#c7d7f0" stroke="#b4b4b4" stroke-width="1"/></svg>
<svg class="a" style="left:512px;top:256px" width="11" height="15" viewBox="0 0 11 15"><path d="M0.5 0.5H7L10.5 4V14.5H0.5Z" fill="#f8f8f8" stroke="#5a6a8a"/><path d="M7 0.5V4H10.5" fill="none" stroke="#5a6a8a"/><path d="M2 2L5 5L2 8L5 11L2 14" stroke="#d8d8d8" fill="none"/></svg>
<div class="a ui" style="left:534px;top:257px;color:#000;transform:scaleX(0.902)">stm32f1xx_it.c</div>
<svg class="a" style="left:617px;top:252px" width="145" height="22" viewBox="0 0 145 22"><path d="M0.5 21.5L3.5 0.5H142.5L144.5 2V21.5" fill="#eea4a4" stroke="#b4b4b4" stroke-width="1"/></svg>
<svg class="a" style="left:627px;top:256px" width="11" height="15" viewBox="0 0 11 15"><path d="M0.5 0.5H7L10.5 4V14.5H0.5Z" fill="#f8f8f8" stroke="#5a6a8a"/><path d="M7 0.5V4H10.5" fill="none" stroke="#5a6a8a"/><path d="M2 2L5 5L2 8L5 11L2 14" stroke="#d8d8d8" fill="none"/></svg>
<div class="a ui" style="left:650px;top:257px;color:#000;transform:scaleX(0.918)">stm32f1xx_hal_tim.c</div>
<svg class="a" style="left:762px;top:252px" width="68" height="22" viewBox="0 0 68 22"><path d="M0.5 21.5L3.5 0.5H65.5L67.5 2V21.5" fill="#a9c1d9" stroke="#b4b4b4" stroke-width="1"/></svg>
<svg class="a" style="left:775px;top:256px" width="11" height="15" viewBox="0 0 11 15"><path d="M0.5 0.5H7L10.5 4V14.5H0.5Z" fill="#f8f8f8" stroke="#5a6a8a"/><path d="M7 0.5V4H10.5" fill="none" stroke="#5a6a8a"/><path d="M2 2L5 5L2 8L5 11L2 14" stroke="#d8d8d8" fill="none"/></svg>
<div class="a ui" style="left:793px;top:257px;color:#000;transform:scaleX(0.949)">tim.c</div>
<svg class="a" style="left:831px;top:252px" width="99" height="22" viewBox="0 0 99 22"><path d="M0.5 21.5L3.5 0.5H96.5L98.5 2V21.5" fill="#c7d7f0" stroke="#b4b4b4" stroke-width="1"/></svg>
<svg class="a" style="left:840px;top:256px" width="11" height="15" viewBox="0 0 11 15"><path d="M0.5 0.5H7L10.5 4V14.5H0.5Z" fill="#f8f8f8" stroke="#5a6a8a"/><path d="M7 0.5V4H10.5" fill="none" stroke="#5a6a8a"/><path d="M2 2L5 5L2 8L5 11L2 14" stroke="#d8d8d8" fill="none"/></svg>
<div class="a ui" style="left:861px;top:257px;color:#000;transform:scaleX(0.973)">datastore.h</div>
<svg class="a" style="left:1046px;top:252px" width="112" height="22" viewBox="0 0 112 22"><path d="M0.5 21.5L3.5 0.5H109.5L111.5 2V21.5" fill="#c7d7f0" stroke="#b4b4b4" stroke-width="1"/></svg>
<svg class="a" style="left:1057px;top:256px" width="11" height="15" viewBox="0 0 11 15"><path d="M0.5 0.5H7L10.5 4V14.5H0.5Z" fill="#f8f8f8" stroke="#5a6a8a"/><path d="M7 0.5V4H10.5" fill="none" stroke="#5a6a8a"/><path d="M2 2L5 5L2 8L5 11L2 14" stroke="#d8d8d8" fill="none"/></svg>
<div class="a ui" style="left:1078px;top:257px;color:#000;transform:scaleX(0.997)">dataupload.h</div>
<svg class="a" style="left:1158px;top:252px" width="98" height="22" viewBox="0 0 98 22"><path d="M0.5 21.5L3.5 0.5H95.5L97.5 2V21.5" fill="#c3d5a9" stroke="#b4b4b4" stroke-width="1"/></svg>
<svg class="a" style="left:1171px;top:256px" width="11" height="15" viewBox="0 0 11 15"><path d="M0.5 0.5H7L10.5 4V14.5H0.5Z" fill="#f8f8f8" stroke="#5a6a8a"/><path d="M7 0.5V4H10.5" fill="none" stroke="#5a6a8a"/><path d="M2 2L5 5L2 8L5 11L2 14" stroke="#d8d8d8" fill="none"/></svg>
<div class="a ui" style="left:1190px;top:257px;color:#000;transform:scaleX(0.952)">datapack.h</div>
<svg class="a" style="left:1257px;top:252px" width="97" height="22" viewBox="0 0 97 22"><path d="M0.5 21.5L3.5 0.5H94.5L96.5 2V21.5" fill="#cacbd9" stroke="#b4b4b4" stroke-width="1"/></svg>
<svg class="a" style="left:1267px;top:256px" width="11" height="15" viewBox="0 0 11 15"><path d="M0.5 0.5H7L10.5 4V14.5H0.5Z" fill="#f8f8f8" stroke="#5a6a8a"/><path d="M7 0.5V4H10.5" fill="none" stroke="#5a6a8a"/><path d="M2 2L5 5L2 8L5 11L2 14" stroke="#d8d8d8" fill="none"/></svg>
<div class="a ui" style="left:1288px;top:257px;color:#000;transform:scaleX(0.943)">datapack.c</div>
<svg class="a" style="left:1354px;top:252px" width="100" height="22" viewBox="0 0 100 22"><path d="M0.5 21.5L3.5 0.5H97.5L99.5 2V21.5" fill="#c7d7f0" stroke="#b4b4b4" stroke-width="1"/></svg>
<svg class="a" style="left:1364px;top:256px" width="11" height="15" viewBox="0 0 11 15"><path d="M0.5 0.5H7L10.5 4V14.5H0.5Z" fill="#f8f8f8" stroke="#5a6a8a"/><path d="M7 0.5V4H10.5" fill="none" stroke="#5a6a8a"/><path d="M2 2L5 5L2 8L5 11L2 14" stroke="#d8d8d8" fill="none"/></svg>
<div class="a ui" style="left:1385px;top:257px;color:#000;transform:scaleX(0.939)">bsp_uart2.c</div>
<svg class="a" style="left:1455px;top:252px" width="143" height="22" viewBox="0 0 143 22"><path d="M0.5 21.5L3.5 0.5H140.5L142.5 2V21.5" fill="#fcda90" stroke="#b4b4b4" stroke-width="1"/></svg>
<svg class="a" style="left:1468px;top:256px" width="11" height="15" viewBox="0 0 11 15"><path d="M0.5 0.5H7L10.5 4V14.5H0.5Z" fill="#f8f8f8" stroke="#5a6a8a"/><path d="M7 0.5V4H10.5" fill="none" stroke="#5a6a8a"/><path d="M2 2L5 5L2 8L5 11L2 14" stroke="#d8d8d8" fill="none"/></svg>
<div class="a ui" style="left:1488px;top:257px;color:#000;transform:scaleX(0.891)">system_stm32f1xx.c</div>
<svg class="a" style="left:1599px;top:252px" width="156" height="22" viewBox="0 0 156 22"><path d="M0.5 21.5L3.5 0.5H153.5L155.5 2V21.5" fill="#fcda90" stroke="#b4b4b4" stroke-width="1"/></svg>
<svg class="a" style="left:1610px;top:256px" width="11" height="15" viewBox="0 0 11 15"><path d="M0.5 0.5H7L10.5 4V14.5H0.5Z" fill="#f8f8f8" stroke="#5a6a8a"/><path d="M7 0.5V4H10.5" fill="none" stroke="#5a6a8a"/><path d="M2 2L5 5L2 8L5 11L2 14" stroke="#d8d8d8" fill="none"/></svg>
<div class="a ui" style="left:1631px;top:257px;color:#000;transform:scaleX(0.923)">startup_stm32f103xe.s</div>
<svg class="a" style="left:1756px;top:252px" width="76" height="22" viewBox="0 0 76 22"><path d="M0.5 21.5L3.5 0.5H73.5L75.5 2V21.5" fill="#c3d5a9" stroke="#b4b4b4" stroke-width="1"/></svg>
<svg class="a" style="left:1768px;top:256px" width="11" height="15" viewBox="0 0 11 15"><path d="M0.5 0.5H7L10.5 4V14.5H0.5Z" fill="#f8f8f8" stroke="#5a6a8a"/><path d="M7 0.5V4H10.5" fill="none" stroke="#5a6a8a"/><path d="M2 2L5 5L2 8L5 11L2 14" stroke="#d8d8d8" fill="none"/></svg>
<div class="a ui" style="left:1787px;top:257px;color:#000;transform:scaleX(0.94)">main.c</div>
<svg class="a" style="left:919px;top:252px" width="126" height="22" viewBox="0 0 126 22"><path d="M0.5 21.5L17.5 0.5H123.5L125.5 2V21.5" fill="#efdcb0" stroke="#b4b4b4" stroke-width="1"/></svg>
<svg class="a" style="left:943px;top:256px" width="11" height="15" viewBox="0 0 11 15"><path d="M0.5 0.5H7L10.5 4V14.5H0.5Z" fill="#f8f8f8" stroke="#5a6a8a"/><path d="M7 0.5V4H10.5" fill="none" stroke="#5a6a8a"/><path d="M2 2L5 5L2 8L5 11L2 14" stroke="#d8d8d8" fill="none"/></svg>
<div class="a ui" style="left:962px;top:257px;color:#000;font-weight:bold;transform:scaleX(0.92)">dataupload.c*</div>
<div class="a" style="left:961px;top:271px;width:78px;height:2px;background:#000"></div>
<svg class="a" style="left:1883px;top:257px" width="9" height="8" viewBox="0 0 9 8"><rect x="0" y="0" width="8" height="2" fill="#000"/><path d="M0 3H8L4 7Z" fill="#000"/></svg>
<svg class="a" style="left:1902px;top:257px" width="10" height="10" viewBox="0 0 10 10"><path d="M1 1L9 9M9 1L1 9" stroke="#000" stroke-width="1.6"/></svg>
<div class="a" style="left:404px;top:273px;width:1517px;height:388px;background:#f0d8a0;border-left:1px solid #a8a8a8;border-right:2px solid #a0a0a0;border-bottom:1px solid #a8a8a8"></div>
<div class="a" style="left:407px;top:275px;width:1510px;height:381px;background:#fff;border-left:2px solid #6d6d6d;border-top:2px solid #6d6d6d"></div>
<div class="a" style="left:409px;top:277px;width:68px;height:361px;background:#e8e8e8"></div>
<div class="a" style="left:477px;top:277px;width:14px;height:361px;background-color:#fff;background-image:linear-gradient(45deg,#e4e4e4 25%,transparent 25%,transparent 75%,#e4e4e4 75%),linear-gradient(45deg,#e4e4e4 25%,transparent 25%,transparent 75%,#e4e4e4 75%);background-size:2px 2px;background-position:0 0,1px 1px"></div>
<div class="a" style="left:491px;top:277px;width:1407px;height:361px;background:#2f2f2f"></div>
<div class="a" style="left:409px;top:486px;width:20px;height:19px;background:#c0c0c0"></div>
<div class="a" style="left:409px;top:562px;width:20px;height:19px;background:#c0c0c0"></div>
<div class="a" style="left:409px;top:600px;width:20px;height:38px;background:#c0c0c0"></div>
<svg class="a" style="left:413px;top:488px" width="12" height="12" viewBox="0 0 12 12"><circle cx="6" cy="6" r="5.5" fill="#e00000"/><circle cx="6" cy="6" r="5.5" fill="none" stroke="#900" stroke-width="0.6"/></svg>
<svg class="a" style="left:410px;top:564px" width="18" height="15" viewBox="0 0 18 15"><path d="M0.5 0.5L8 7.5L0.5 14.5Z" fill="#30e0f0" stroke="#203040" stroke-width="0.8"/><path d="M8.5 0.5L16 7.5L8.5 14.5Z" fill="#f8f800" stroke="#303000" stroke-width="0.8"/></svg>
<div class="a" style="left:479px;top:281px;width:11px;height:11px;background:#fff;border:1px solid #808080"><div class="a" style="left:2px;top:4px;width:5px;height:1px;background:#404040"></div></div>
<div class="a" style="left:484px;top:292px;width:1px;height:126px;background:#808080"></div>
<div class="a" style="left:484px;top:417px;width:6px;height:1px;background:#808080"></div>
<div class="a" style="left:479px;top:490px;width:11px;height:11px;background:#fff;border:1px solid #808080"><div class="a" style="left:2px;top:4px;width:5px;height:1px;background:#404040"></div></div>
<div class="a" style="left:484px;top:501px;width:1px;height:130px;background:#808080"></div>
<div class="a" style="left:484px;top:630px;width:6px;height:1px;background:#808080"></div>
<div class="a mono ednum" style="left:429px;top:279px;width:45px;text-align:right">144</div><div class="a mono edcode" style="left:492px;top:279px"><span style="color:#8f8a19">{</span></div>
<div class="a mono ednum" style="left:429px;top:298px;width:45px;text-align:right">145</div><div class="a mono edcode" style="left:492px;top:298px">  <i style="color:#1fb0f0">unsigned</i> <i style="color:#1fb0f0">char</i>  <span style="color:#f2f2f2">aData</span><span style="color:#8f8a19">[</span><span style="color:#f0147f">200</span><span style="color:#8f8a19">];</span></div>
<div class="a mono ednum" style="left:429px;top:317px;width:45px;text-align:right">146</div><div class="a mono edcode" style="left:492px;top:317px">  <span style="color:#f07cf0">//  unsigned char  msgLen;</span></div>
<div class="a mono ednum" style="left:429px;top:336px;width:45px;text-align:right">147</div><div class="a mono edcode" style="left:492px;top:336px">  <i style="color:#1fb0f0">unsigned</i> <i style="color:#1fb0f0">char</i>  <span style="color:#8f8a19">*</span><span style="color:#f2f2f2">pData</span> <span style="color:#8f8a19">=</span> <span style="color:#f2f2f2">aData</span><span style="color:#8f8a19">;</span></div>
<div class="a mono ednum" style="left:429px;top:355px;width:45px;text-align:right">148</div><div class="a mono edcode" style="left:492px;top:355px">  <span style="color:#f2f2f2">pData</span> <span style="color:#8f8a19">=</span> <span style="color:#f2f2f2">loginDataUnpack</span><span style="color:#8f8a19">();</span></div>
<div class="a mono ednum" style="left:429px;top:374px;width:45px;text-align:right">149</div><div class="a mono edcode" style="left:492px;top:374px">  <span style="color:#f2f2f2">delay_ms</span><span style="color:#8f8a19">(</span><span style="color:#f0147f">500</span><span style="color:#8f8a19">);</span></div>
<div class="a mono ednum" style="left:429px;top:393px;width:45px;text-align:right">150</div><div class="a mono edcode" style="left:492px;top:393px">  <span style="color:#f2f2f2">login_send</span><span style="color:#8f8a19">(</span><span style="color:#f2f2f2">pData</span><span style="color:#8f8a19">,</span> <span style="color:#f0147f">31</span><span style="color:#8f8a19">);</span></div>
<div class="a mono ednum" style="left:429px;top:412px;width:45px;text-align:right">151</div><div class="a mono edcode" style="left:492px;top:412px"><span style="color:#8f8a19">}</span></div>
<div class="a mono ednum" style="left:429px;top:431px;width:45px;text-align:right">152</div><div class="a mono edcode" style="left:492px;top:431px"></div>
<div class="a mono ednum" style="left:429px;top:450px;width:45px;text-align:right">153</div><div class="a mono edcode" style="left:492px;top:450px"></div>
<div class="a mono ednum" style="left:429px;top:469px;width:45px;text-align:right">154</div><div class="a mono edcode" style="left:492px;top:469px"><i style="color:#1fb0f0">void</i> <span style="color:#f2f2f2">upload_data</span><span style="color:#8f8a19">(</span>  <i style="color:#1fb0f0">unsigned</i> <i style="color:#1fb0f0">char</i>  <span style="color:#8f8a19">*</span><span style="color:#f2f2f2">uploaddata</span><span style="color:#8f8a19">)</span></div>
<div class="a mono ednum" style="left:429px;top:488px;width:45px;text-align:right">155</div><div class="a mono edcode" style="left:492px;top:488px"><span style="color:#8f8a19">{</span></div>
<div class="a mono ednum" style="left:429px;top:507px;width:45px;text-align:right">156</div><div class="a mono edcode" style="left:492px;top:507px"><span style="color:#f07cf0">//  char *redata;</span></div>
<div class="a mono ednum" style="left:429px;top:526px;width:45px;text-align:right">157</div><div class="a mono edcode" style="left:492px;top:526px"></div>
<div class="a mono ednum" style="left:429px;top:545px;width:45px;text-align:right">158</div><div class="a mono edcode" style="left:492px;top:545px"></div>
<div class="a mono ednum" style="left:429px;top:564px;width:45px;text-align:right">159</div><div class="a mono edcode" style="left:492px;top:564px">  <span style="color:#f2f2f2">upload_send</span><span style="color:#8f8a19">(</span><span style="color:#f2f2f2">uploaddata</span><span style="color:#8f8a19">,</span><span style="color:#f0147f">111</span><span style="color:#8f8a19">);</span></div>
<div class="a mono ednum" style="left:429px;top:583px;width:45px;text-align:right">160</div><div class="a mono edcode" style="left:492px;top:583px"></div>
<div class="a mono ednum" style="left:429px;top:602px;width:45px;text-align:right">161</div><div class="a mono edcode" style="left:492px;top:602px">  <span style="color:#f2f2f2">dataSave2Flash</span><span style="color:#8f8a19">(</span><span style="color:#f2f2f2">uploaddata</span><span style="color:#8f8a19">);</span></div>
<div class="a mono ednum" style="left:429px;top:621px;width:45px;text-align:right">162</div><div class="a mono edcode" style="left:492px;top:621px"><span style="color:#8f8a19">}</span></div>
<div class="a" style="left:1898px;top:277px;width:1px;height:361px;background:#fff"></div>
<div class="a" style="left:1899px;top:277px;width:17px;height:361px;background:#f0f0f0"></div>
<svg class="a" style="left:1903px;top:282px" width="9" height="7" viewBox="0 0 9 7"><path d="M1 5.5L4.5 2L8 5.5" fill="none" stroke="#606060" stroke-width="2.2"/></svg>
<svg class="a" style="left:1903px;top:626px" width="9" height="7" viewBox="0 0 9 7"><path d="M1 1.5L4.5 5L8 1.5" fill="none" stroke="#606060" stroke-width="2.2"/></svg>
<div class="a" style="left:1900px;top:583px;width:15px;height:37px;background:#cdcdcd"></div>
<div class="a" style="left:409px;top:638px;width:1507px;height:17px;background:#f0f0f0"></div>
<svg class="a" style="left:414px;top:642px" width="7" height="9" viewBox="0 0 7 9"><path d="M5.5 1L2 4.5L5.5 8" fill="none" stroke="#606060" stroke-width="2.2"/></svg>
<svg class="a" style="left:1904px;top:642px" width="7" height="9" viewBox="0 0 7 9"><path d="M1.5 1L5 4.5L1.5 8" fill="none" stroke="#606060" stroke-width="2.2"/></svg>
<div class="a" style="left:426px;top:639px;width:1022px;height:15px;background:#cdcdcd"></div>
<div class="a" style="left:0px;top:659px;width:1920px;height:5px;background:#fff"></div>
<div class="hdr" style="left:0;top:664px;width:1920px"><span>Command</span><div class="pin" style="left:1888px"><svg width="8" height="9" viewBox="0 0 8 9"><rect x="1" y="0" width="5" height="6" fill="#000"/><rect x="2.3" y="1.2" width="1.6" height="3.6" fill="#dfe8f2"/><rect x="0" y="5" width="8" height="1.6" fill="#000"/><rect x="3" y="6" width="1.6" height="3" fill="#000"/></svg></div><div class="xbtn" style="left:1904px"><svg width="12" height="12" viewBox="0 0 12 12"><path d="M3.5 3.5L8.5 8.5M8.5 3.5L3.5 8.5" stroke="#fff" stroke-width="1.9"/></svg></div></div>
<div class="a" style="left:0px;top:684px;width:1920px;height:103px;background:#fff;border-left:2px solid #6d6d6d;border-top:2px solid #6d6d6d;border-right:1px solid #a0a0a0"></div>
<div class="a mono cour" style="left:4px;top:686px">WS 1, `Buffer</div>
<div class="a mono cour" style="left:4px;top:702px">WS 1, `W25QXX_Write</div>
<div class="a mono cour" style="left:4px;top:718px">WS 1, `aData</div>
<div class="a mono cour" style="left:4px;top:734px">WS 2, `pData</div>
<div class="a" style="left:1901px;top:686px;width:17px;height:79px;background:#f0f0f0"></div>
<svg class="a" style="left:1905px;top:691px" width="9" height="7" viewBox="0 0 9 7"><path d="M1 5.5L4.5 2L8 5.5" fill="none" stroke="#606060" stroke-width="2.2"/></svg>
<svg class="a" style="left:1905px;top:753px" width="9" height="7" viewBox="0 0 9 7"><path d="M1 1.5L4.5 5L8 1.5" fill="none" stroke="#606060" stroke-width="2.2"/></svg>
<div class="a" style="left:1902px;top:725px;width:15px;height:21px;background:#cdcdcd"></div>
<div class="a" style="left:2px;top:765px;width:1899px;height:17px;background:#f0f0f0"></div>
<svg class="a" style="left:7px;top:769px" width="7" height="9" viewBox="0 0 7 9"><path d="M5.5 1L2 4.5L5.5 8" fill="none" stroke="#a8a8a8" stroke-width="2.2"/></svg>
<svg class="a" style="left:1889px;top:769px" width="7" height="9" viewBox="0 0 7 9"><path d="M1.5 1L5 4.5L1.5 8" fill="none" stroke="#a8a8a8" stroke-width="2.2"/></svg>
<div class="a" style="left:1901px;top:765px;width:18px;height:17px;background:#f0f0f0"></div>
<div class="a" style="left:0px;top:782px;width:1920px;height:4px;background:#f5f5f5;border-bottom:1px solid #e0e0e0"></div>
<div class="a" style="left:0px;top:786px;width:1920px;height:1px;background:#6d6d6d"></div>
<div class="a" style="left:0px;top:787px;width:1920px;height:19px;background:#fff"></div>
<div class="a" style="left:0px;top:787px;width:16px;height:18px;background:#f0f0f0"></div>
<div class="a mono cour" style="left:8px;top:788px">&gt;</div>
<div class="a" style="left:1px;top:806px;width:1918px;height:22px;background:#f0f0f0;border:1px solid #dadada;border-right-color:#a0a0a0;border-bottom-color:#a0a0a0"></div>
<div class="a mono cour" style="left:3px;top:808px">ASSIGN BreakDisable BreakEnable BreakKill BreakList BreakSet BreakAccess COVERAGE DEFINE DIR Display Enter EVALuate EXIT FUNC Go INCLUDE IRLOG ITMLOG KILL LogicAnalyze LOAD LOG MAP MODE Ostep PerformanceAnalyze Pstep RESET SAVE SCOPE SET</div>
<div class="a" style="left:0px;top:828px;width:1920px;height:4px;background:#fff"></div>
<div class="hdr act" style="left:0;top:832px;width:1920px"><span>Memory 1</span><div class="pin" style="left:1888px"><svg width="8" height="9" viewBox="0 0 8 9"><rect x="1" y="0" width="5" height="6" fill="#000"/><rect x="2.3" y="1.2" width="1.6" height="3.6" fill="#dfe8f2"/><rect x="0" y="5" width="8" height="1.6" fill="#000"/><rect x="3" y="6" width="1.6" height="3" fill="#000"/></svg></div><div class="xbtn" style="left:1904px"><svg width="12" height="12" viewBox="0 0 12 12"><path d="M3.5 3.5L8.5 8.5M8.5 3.5L3.5 8.5" stroke="#fff" stroke-width="1.9"/></svg></div></div>
<div class="a" style="left:0px;top:850px;width:1920px;height:2px;background:#fff"></div>
<div class="a" style="left:0px;top:852px;width:1920px;height:146px;background:#f0f0f0;border-left:2px solid #a8a8a8;border-top:2px solid #a8a8a8;border-right:1px solid #a0a0a0"></div>
<div class="a ui" style="left:12px;top:864px;color:#000;transform:scaleX(.845)">Address:</div>
<div class="a" style="left:57px;top:862px;width:233px;height:20px;background:#fff;border:1px solid #c8c8c8;border-top:2px solid #707070;border-left:2px solid #707070"></div>
<div class="a ui" style="left:59px;top:864px;color:#000">uploaddata</div>
<div class="a" style="left:1872px;top:859px;width:24px;height:25px;background:#f0f0f0;border:1px solid #606060"></div>
<svg class="a" style="left:1877px;top:862px" width="14" height="18" viewBox="0 0 14 18"><path d="M7 8V4Q7 1 10 1Q13 1 13 4V6" fill="none" stroke="#909090" stroke-width="1.6"/><rect x="1" y="8" width="10" height="9" fill="#c8b060"/><rect x="1" y="8" width="10" height="3" fill="#e0d090"/></svg>
<div class="a" style="left:2px;top:887px;width:1899px;height:1px;background:#a0a0a0"></div>
<div class="a" style="left:2px;top:888px;width:1899px;height:109px;background:#fff"></div>
<div class="a" style="left:2px;top:888px;width:1899px;height:109px;overflow:hidden"><div class="a mono cour" style="left:1px;top:2px">0x20001500: 23 23 02 FE 64 65 76 69 63 65 43 6F 64 65 30 30 30 30 31 31 31 01 00 56 00 00 00 16 38 37 00 00 00 00 00 00 00 00 00 00 00 00 00 00 00 00 00 00 00 00 00 00 00 00 00 00 00 00 00 00 00 00 00 00 00 00 00 00 00 00 00 00 00 00 00</div><div class="a mono cour" style="left:1px;top:18px">0x2000154B: 00 00 00 00 00 00 00 00 00 00 00 00 00 00 00 00 00 00 00 00 00 00 00 00 00 00 00 00 00 00 00 00 00 00 00 B6 00 00 00 00 00 00 00 00 00 00 00 00 00 00 00 00 00 00 00 00 00 00 00 00 00 00 00 00 00 00 00 00 00 00 04 00 40 7F 3E</div><div class="a mono cour" style="left:1px;top:34px">0x20001596: 00 00 00 00 00 00 C7 AF 00 00 00 00 00 00 00 00 00 00 00 00 00 00 00 00 00 00 00 00 00 00 00 00 00 00 00 00 00 00 00 00 00 00 00 00 00 00 00 00 00 00 00 00 00 00 00 01 00 00 00 38 01 40 80 25 00 00 00 00 00 00 00 00 00 00 00</div><div class="a mono cour" style="left:1px;top:50px">0x200015E1: 00 00 00 0C 00 00 00 00 00 00 00 00 00 00 00 00 00 00 00 00 00 00 00 00 00 00 00 00 00 00 00 00 00 00 00 00 00 00 00 00 20 20 00 00 00 00 00 00 44 00 40 80 25 00 00 00 00 00 00 00 00 00 00 00 00 00 00 0C 00 00 00 00 00 00 00</div><div class="a mono cour" style="left:1px;top:66px">0x2000162C: 00 00 00 00 00 00 00 00 08 00 00 00 68 00 00 20 01 00 01 00 00 00 00 00 00 00 00 00 00 20 22 00 00 00 00 00 00 48 00 40 80 25 00 00 00 00 00 00 00 00 00 00 00 00 00 00 0C 00 00 00 00 00 00 00 00 00 00 00 00 00 00 00 00 00 00</div><div class="a mono cour" style="left:1px;top:82px">0x20001677: 00 69 00 00 20 01 00 01 00 00 00 00 00 00 00 00 00 00 20 22 00 00 00 00 00 00 28 00 40 00 00 00 00 00 00 00 00 00 00 00 00 00 00 00 00 00 38 00 40 04 01 00 00 00 00 00 00 00 00 00 00 02 00 00 00 01 00 00 00 00 02 00 00 08 00</div><div class="a mono cour" style="left:1px;top:98px">0x200016C2: 00 00 00 00 00 00 00 00 00 00 00 00 00 00 0A 00 00 00 00 00 00 00 00 00 00 00 00 00 00 00 00 00 00 00 00 00 00 00 00 00 00 00 00 00 00 00 00 00 00 00 00 01 00 00 00 00 00 00 00 00 00 00 00 00 00 00 00 00 00 00 00 00 00 00 00</div></div>
<div class="a" style="left:1901px;top:856px;width:17px;height:141px;background:#f0f0f0"></div>
<svg class="a" style="left:1905px;top:861px" width="9" height="7" viewBox="0 0 9 7"><path d="M1 5.5L4.5 2L8 5.5" fill="none" stroke="#606060" stroke-width="2.2"/></svg>
<svg class="a" style="left:1905px;top:985px" width="9" height="7" viewBox="0 0 9 7"><path d="M1 1.5L4.5 5L8 1.5" fill="none" stroke="#606060" stroke-width="2.2"/></svg>
<div class="a" style="left:1902px;top:873px;width:15px;height:17px;background:#cdcdcd"></div>
<div class="a" style="left:0px;top:997px;width:1920px;height:2px;background:#000"></div>
<div class="a" style="left:0px;top:999px;width:1920px;height:22px;background:#f5f5f5"></div>
<svg class="a" style="left:5px;top:1002px" width="18" height="17" viewBox="0 0 18 17"><rect x="5.5" y="1.5" width="7" height="6" fill="#fff" stroke="#5a6a8a"/><rect x="9.5" y="6.5" width="7" height="6" fill="#fff" stroke="#5a6a8a"/><rect x="1.5" y="7.5" width="6" height="6" fill="#eaf0fa" stroke="#5a6a8a"/><path d="M1 13L4 16L7 13Z" fill="#3a6ad8"/></svg>
<div class="a ui" style="left:24px;top:1002px;color:#8c8c8c">Call Stack + Locals</div>
<div class="a" style="left:124px;top:1003px;width:1px;height:14px;background:#b0b0b0"></div>
<svg class="a" style="left:130px;top:1001px" width="16" height="17" viewBox="0 0 16 17"><rect x="0.5" y="0.5" width="13" height="12" fill="#fff" stroke="#3a5080"/><rect x="1" y="1" width="12" height="2" fill="#5a8ad8"/><path d="M2 5H9M2 7H6M2 9H8" stroke="#506080"/><path d="M6 15L13 9L15 11L8 16Z" fill="#505050"/><path d="M12 9L15 6" stroke="#c02020" stroke-width="1.5"/></svg>
<div class="a ui" style="left:147px;top:1002px;color:#8c8c8c">UART #1</div>
<div class="a" style="left:197px;top:1003px;width:1px;height:14px;background:#b0b0b0"></div>
<div class="a ui" style="left:204px;top:1002px;color:#8c8c8c">Watch 1</div>
<div class="a" style="left:252px;top:1003px;width:1px;height:14px;background:#b0b0b0"></div>
<div class="a ui" style="left:259px;top:1002px;color:#8c8c8c">Watch 2</div>
<div class="a" style="left:307px;top:1003px;width:1px;height:14px;background:#b0b0b0"></div>
<svg class="a" style="left:311px;top:1001px" width="16" height="17" viewBox="0 0 16 17"><rect x="0.5" y="0.5" width="14" height="12" fill="#fff" stroke="#3a5080"/><rect x="1" y="1" width="13" height="2" fill="#5a8ad8"/><path d="M3 5H12M3 7H12M3 9H12" stroke="#7080a0" stroke-dasharray="1,1"/><path d="M1 16L4 12L7 15L10 11" fill="none" stroke="#2a3a6a" stroke-width="1.3"/></svg>
<div class="a ui" style="left:329px;top:1002px;color:#8c8c8c">Trace Exceptions</div>
<div class="a" style="left:420px;top:1003px;width:1px;height:14px;background:#b0b0b0"></div>
<div class="a" style="left:421px;top:997px;width:78px;height:23px;background:#f5f5f5;border:1px solid #000;border-top:none"></div>
<svg class="a" style="left:425px;top:1003px" width="14" height="13" viewBox="0 0 14 13"><rect x="0.5" y="0.5" width="13" height="12" fill="#fff" stroke="#3a5080"/><rect x="1" y="1" width="12" height="2" fill="#5a8ad8"/><path d="M2.5 5.5H11.5M2.5 7.5H11.5M2.5 9.5H11.5" stroke="#7888a8" stroke-dasharray="1,1"/></svg>
<div class="a ui" style="left:442px;top:1002px;color:#000">Memory 1</div>
<div class="a" style="left:0px;top:1021px;width:1920px;height:1px;background:#dadada"></div>
<div class="a" style="left:0px;top:1022px;width:1920px;height:18px;background:#f0f0f0"></div>
<div class="a" style="left:1400px;top:1023px;width:1px;height:16px;background:#d0d0d0"></div>
<div class="a" style="left:1552px;top:1023px;width:1px;height:16px;background:#d0d0d0"></div>
<div class="a" style="left:1677px;top:1023px;width:1px;height:16px;background:#d0d0d0"></div>
<div class="a" style="left:1770px;top:1023px;width:1px;height:16px;background:#d0d0d0"></div>
<div class="a" style="left:1797px;top:1023px;width:1px;height:16px;background:#d0d0d0"></div>
<div class="a" style="left:1828px;top:1023px;width:1px;height:16px;background:#d0d0d0"></div>
<div class="a" style="left:1859px;top:1023px;width:1px;height:16px;background:#d0d0d0"></div>
<div class="a" style="left:1888px;top:1023px;width:1px;height:16px;background:#d0d0d0"></div>
<div class="a ui" style="left:1405px;top:1025px;color:#000;transform:scaleX(.94)">ST-Link Debugger</div>
<div class="a ui" style="left:1557px;top:1025px;color:#000;transform:scaleX(.896)">t1: 41.18566661 sec</div>
<div class="a ui" style="left:1682px;top:1025px;color:#000;transform:scaleX(.875)">L:159 C:1</div>
<div class="a ui" style="left:1775px;top:1025px;color:#8c8c8c;transform:scaleX(0.81)">CAP</div>
<div class="a ui" style="left:1801px;top:1025px;color:#000;transform:scaleX(0.916)">NUM</div>
<div class="a ui" style="left:1833px;top:1025px;color:#8c8c8c;transform:scaleX(0.76)">SCRL</div>
<div class="a ui" style="left:1864px;top:1025px;color:#8c8c8c;transform:scaleX(0.846)">OVR</div>
<div class="a ui" style="left:1893px;top:1025px;color:#8c8c8c;transform:scaleX(0.9)">R/W</div>
<div class="a" style="left:0px;top:1040px;width:1928px;height:8px;background:#1d130d"></div>
<div class="a" style="left:200px;top:1040px;width:24px;height:8px;background:#3c6a30"></div>
<div class="a" style="left:224px;top:1040px;width:16px;height:8px;background:#3a3028"></div>
<div class="a" style="left:392px;top:1040px;width:48px;height:8px;background:#504840"></div>
<div class="a" style="left:1920px;top:0px;width:8px;height:23px;background:#fff"></div>
<svg class="a" style="left:1921px;top:3px" width="7" height="16" viewBox="0 0 7 16"><rect x="0.5" y="0.5" width="10" height="14" fill="#fff" stroke="#404040"/><rect x="2" y="2" width="8" height="4" fill="#4a7ae0"/><rect x="2" y="8" width="2" height="2" fill="#404040"/><rect x="2" y="11" width="2" height="2" fill="#404040"/></svg>
<div class="a" style="left:1920px;top:23px;width:8px;height:25px;background:#bfdbfb"></div>
<div class="a" style="left:1920px;top:48px;width:8px;height:25px;background:linear-gradient(#e0ecfa,#cfe2f8)"></div>
<div class="a" style="left:1920px;top:73px;width:8px;height:27px;background:#c4d8ee"></div>
<div class="a ui" style="left:1921px;top:78px;color:#2a5aa0;font-size:13px">S</div>
<div class="a" style="left:1920px;top:100px;width:8px;height:25px;background:linear-gradient(#dfeaf8,#bcd8f8)"></div>
<div class="a" style="left:1920px;top:125px;width:8px;height:20px;background:#fff"></div>
<div class="a ui" style="left:1921px;top:126px;color:#c08040;font-size:13px">F</div>
<div class="a" style="left:1920px;top:145px;width:8px;height:559px;background:#fff;border-left:2px solid #606060;border-top:2px solid #606060;border-bottom:1px solid #909090"></div>
<div class="a" style="left:1920px;top:704px;width:8px;height:24px;background:linear-gradient(#dce8f8,#c8dcf4)"></div>
<div class="a ui" style="left:1922px;top:708px;color:#2a5aa0;font-size:13px">F</div>
<div class="a" style="left:1920px;top:728px;width:8px;height:320px;background:#000"></div>
<div class="a" style="left:1909px;top:297px;width:42px;height:42px;border-radius:50%;background:rgba(196,248,246,0.85)"></div>
<div class="a" style="left:1920px;top:307px;width:24px;height:24px;border-radius:50%;border:2px solid #fff"></div>
<div class="a" style="left:1910px;top:649px;width:10px;height:60px;background:#3a4048;border-radius:2px;border:1px solid #2a2e34"><div class="a" style="left:2px;top:5px;width:4px;height:48px;background:repeating-linear-gradient(#1e2c3a 0 2px,#2a3a4a 2px 3px)"></div><div class="a" style="left:2px;top:52px;width:4px;height:2px;background:#30c0f0"></div></div>
<div class="a" style="left:1700px;top:397px;width:107px;height:39px;border-radius:20px;background:linear-gradient(#f4f4f4,#dcdcdc);box-shadow:0 1px 3px rgba(0,0,0,.5)"></div>
<div class="a" style="left:1681px;top:392px;width:48px;height:48px;border-radius:50%;background:#e8e8e8;box-shadow:0 1px 3px rgba(0,0,0,.6)"></div>
<div class="a" style="left:1683px;top:394px;width:44px;height:44px;border-radius:50%;background:radial-gradient(ellipse at 50% 12%,#5aa080 0,#0a7a4a 30%,#06703f 100%)"></div>
<div class="a ui" style="left:1694px;top:406px;color:#fff;font-size:15px;transform:scaleX(.9)">2%</div>
<svg class="a" style="left:1732px;top:404px" width="8" height="9" viewBox="0 0 8 9"><path d="M4 0L8 4H5V9H3V4H0Z" fill="#e04030"/></svg>
<svg class="a" style="left:1732px;top:419px" width="8" height="9" viewBox="0 0 8 9"><path d="M4 9L8 5H5V0H3V5H0Z" fill="#20a040"/></svg>
<div class="a ui" style="left:1747px;top:404px;color:#000;font-size:10px;transform:scaleX(.93)">0.06K/s</div>
<div class="a ui" style="left:1747px;top:419px;color:#000;font-size:10px;transform:scaleX(.93)">0.04K/s</div>
<div class="a" style="left:1782px;top:407px;width:20px;height:20px;border-radius:50%;background:#d4d4d4"></div>
<div class="a" style="left:1784px;top:409px;width:16px;height:16px;border-radius:50%;background:#3a80e0"></div>
<svg class="a" style="left:1786px;top:411px" width="11" height="11" viewBox="0 0 11 11"><path d="M5.5 1V10M1 5.5H10" stroke="#fff" stroke-width="2"/></svg>
<div class="a" style="left:1793px;top:406px;width:8px;height:8px;border-radius:50%;background:#e02a2a"></div>
<div class="a" style="left:1728px;top:930px;width:192px;height:30px;background:#fff;border:1px solid #c8d8e8;border-radius:2px;box-shadow:0 1px 2px rgba(0,0,0,.2)"></div>
<svg class="a" style="left:1732px;top:929px" width="34" height="31" viewBox="0 0 34 31"><path d="M4 6L28 1L33 24L8 30Z" fill="#f05a1a"/><path d="M24 9Q14 6 12 11Q11 15 19 16Q26 17 22 22Q17 25 9 21" fill="none" stroke="#fff" stroke-width="4"/></svg>
<div class="a" style="left:1771px;top:934px;width:1px;height:22px;background:#f0b0a0"></div>
<div class="a ui" style="left:1779px;top:936px;color:#1060c0;font-size:15px;font-weight:bold;transform:none">英</div>
<svg class="a" style="left:1806px;top:938px" width="12" height="14" viewBox="0 0 12 14"><circle cx="3" cy="4" r="1.5" fill="#1a5fc8"/><path d="M9 3Q10 8 6 12" fill="none" stroke="#1a5fc8" stroke-width="2"/></svg>
<svg class="a" style="left:1826px;top:937px" width="18" height="18" viewBox="0 0 18 18"><circle cx="9" cy="9" r="7.5" fill="none" stroke="#1a5fc8" stroke-width="1.8"/><circle cx="6.5" cy="7" r="1" fill="#1a5fc8"/><circle cx="11.5" cy="7" r="1" fill="#1a5fc8"/><path d="M5.5 10.5Q9 14 12.5 10.5" fill="none" stroke="#1a5fc8" stroke-width="1.5"/></svg>
<svg class="a" style="left:1850px;top:937px" width="18" height="18" viewBox="0 0 18 18"><path d="M3 15L3 11L12 2L16 6L7 15Z" fill="none" stroke="#1a5fc8" stroke-width="2"/><path d="M10 4L14 8" stroke="#1a5fc8" stroke-width="2"/></svg>
<svg class="a" style="left:1875px;top:936px" width="14" height="19" viewBox="0 0 14 19"><rect x="4" y="1" width="6" height="11" rx="3" fill="#1a5fc8"/><path d="M1.5 8Q1.5 14 7 14Q12.5 14 12.5 8M7 14V18M3 18H11" fill="none" stroke="#1a5fc8" stroke-width="1.8"/></svg>
<svg class="a" style="left:1898px;top:937px" width="14" height="14" viewBox="0 0 14 14"><rect x="0" y="0" width="6" height="6" fill="#1a5fc8"/><rect x="8" y="2" width="6" height="4" fill="#1a5fc8"/><rect x="0" y="8" width="6" height="6" fill="#1a5fc8"/><rect x="8" y="8" width="6" height="6" fill="#1a5fc8"/></svg>
</body></html>
